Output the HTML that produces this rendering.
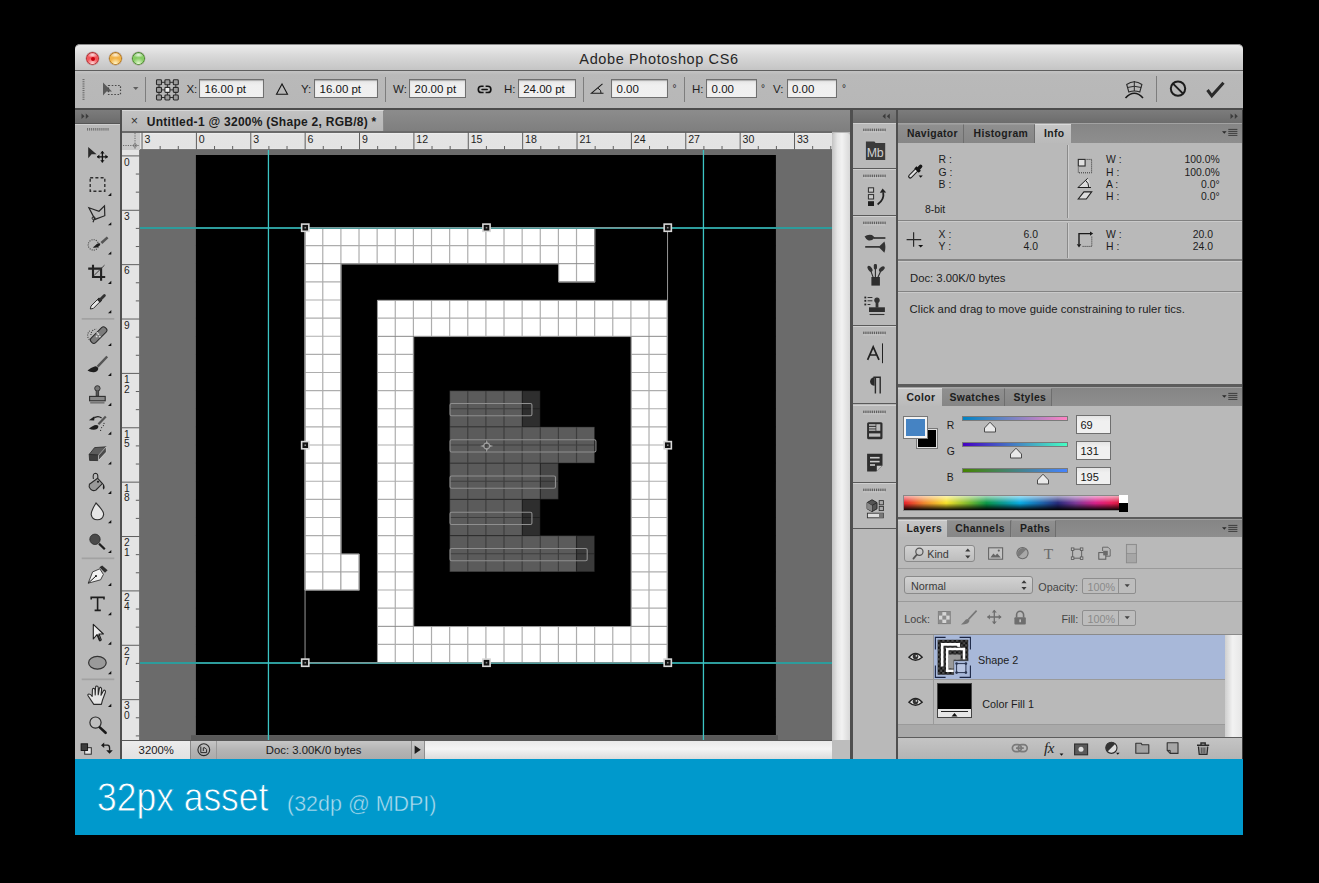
<!DOCTYPE html><html><head><meta charset="utf-8"><style>
html,body{margin:0;padding:0;background:#000;width:1319px;height:883px;overflow:hidden}
body{position:relative;font-family:"Liberation Sans", sans-serif}
div{position:absolute;box-sizing:border-box}
.t{white-space:nowrap}
svg{overflow:visible}
</style></head><body>
<div style="left:75px;top:44px;width:1168px;height:716px;background:#b9b9b9;border-radius:5px 5px 0 0"></div>
<div style="left:75px;top:44px;width:1168px;height:27px;background:linear-gradient(#ececec,#d9d9d9 40%,#c3c3c3);border-radius:5px 5px 0 0;border-top:1px solid #8a8a8a"></div>
<div style="left:75px;top:70px;width:1168px;height:1px;background:#5e5e5e"></div>
<div style="left:86.1px;top:52.099999999999994px;width:13.4px;height:13.4px;border-radius:50%;background:radial-gradient(ellipse 42% 22% at 50% 22%,rgba(255,255,255,.85),rgba(255,255,255,0)),radial-gradient(circle at 50% 88%,#ffd6d6 0%,#f2555a 42%,#f2555a 64%,#a8262a 100%);box-shadow:inset 0 0 0 0.8px #a8262a,0 0 0 0.4px rgba(90,40,40,.35)"></div>
<div style="left:108.8px;top:52.099999999999994px;width:13.4px;height:13.4px;border-radius:50%;background:radial-gradient(ellipse 42% 22% at 50% 22%,rgba(255,255,255,.85),rgba(255,255,255,0)),radial-gradient(circle at 50% 88%,#fff3c4 0%,#f2b348 42%,#f2b348 64%,#a86c12 100%);box-shadow:inset 0 0 0 0.8px #a86c12,0 0 0 0.4px rgba(90,40,40,.35)"></div>
<div style="left:131.5px;top:52.099999999999994px;width:13.4px;height:13.4px;border-radius:50%;background:radial-gradient(ellipse 42% 22% at 50% 22%,rgba(255,255,255,.85),rgba(255,255,255,0)),radial-gradient(circle at 50% 88%,#e4f7cf 0%,#86cc64 42%,#86cc64 64%,#3c7c24 100%);box-shadow:inset 0 0 0 0.8px #3c7c24,0 0 0 0.4px rgba(90,40,40,.35)"></div>
<div style="left:90.6px;top:56.6px;width:4.4px;height:4.4px;border-radius:50%;background:#c8000e"></div>
<div class="t" style="left:359px;width:600px;text-align:center;top:52.13px;font-size:14.5px;line-height:14.5px;color:#262626;font-weight:normal;letter-spacing:0.62px;">Adobe Photoshop CS6</div>
<div style="left:75px;top:71px;width:1168px;height:38px;background:linear-gradient(#c4c4c4,#b9b9b9 10%,#b7b7b7)"></div>
<div style="left:75px;top:108px;width:1168px;height:2px;background:#4c4c4c"></div>
<svg style="position:absolute;left:81px;top:78px;" width="5" height="24" viewBox="81 78 5 24"><rect x="82.5" y="79.0" width="2" height="1.1" fill="#6e6e6e"/><rect x="82.5" y="81.2" width="2" height="1.1" fill="#6e6e6e"/><rect x="82.5" y="83.4" width="2" height="1.1" fill="#6e6e6e"/><rect x="82.5" y="85.6" width="2" height="1.1" fill="#6e6e6e"/><rect x="82.5" y="87.8" width="2" height="1.1" fill="#6e6e6e"/><rect x="82.5" y="90.0" width="2" height="1.1" fill="#6e6e6e"/><rect x="82.5" y="92.2" width="2" height="1.1" fill="#6e6e6e"/><rect x="82.5" y="94.4" width="2" height="1.1" fill="#6e6e6e"/><rect x="82.5" y="96.6" width="2" height="1.1" fill="#6e6e6e"/><rect x="82.5" y="98.8" width="2" height="1.1" fill="#6e6e6e"/></svg>
<svg style="position:absolute;left:100px;top:80px;" width="40" height="20" viewBox="100 80 40 20"><path d="M103 82.5 L103 95.5 L106.5 91.5 L112 91.5 Z" fill="#5a5a5a"/><rect x="108.5" y="85.5" width="12" height="9" fill="none" stroke="#4a4a4a" stroke-width="1.2" stroke-dasharray="1.6 1.6"/><path d="M133 87 L138.5 87 L135.75 90 Z" fill="#5e5e5e"/></svg>
<div style="left:145px;top:77px;width:1px;height:25px;background:#7d7d7d"></div>
<svg style="position:absolute;left:154px;top:78px;" width="26" height="24" viewBox="154 78 26 24"><path d="M159 82.3H175.8M159 89.9H175.8M159 97.5H175.8M159 82.3V97.5M167.4 82.3V97.5M175.8 82.3V97.5" stroke="#2e2e2e" stroke-width="1"/><rect x="156.5" y="79.8" width="5" height="5" rx="0.9" fill="#9c9c9c" stroke="#2a2a2a" stroke-width="1.1"/><rect x="156.5" y="87.4" width="5" height="5" rx="0.9" fill="#9c9c9c" stroke="#2a2a2a" stroke-width="1.1"/><rect x="156.5" y="95.0" width="5" height="5" rx="0.9" fill="#9c9c9c" stroke="#2a2a2a" stroke-width="1.1"/><rect x="164.9" y="79.8" width="5" height="5" rx="0.9" fill="#9c9c9c" stroke="#2a2a2a" stroke-width="1.1"/><rect x="164.9" y="87.4" width="5" height="5" rx="0.9" fill="#f4f4f4" stroke="#2a2a2a" stroke-width="1.1"/><rect x="164.9" y="95.0" width="5" height="5" rx="0.9" fill="#9c9c9c" stroke="#2a2a2a" stroke-width="1.1"/><rect x="173.3" y="79.8" width="5" height="5" rx="0.9" fill="#9c9c9c" stroke="#2a2a2a" stroke-width="1.1"/><rect x="173.3" y="87.4" width="5" height="5" rx="0.9" fill="#9c9c9c" stroke="#2a2a2a" stroke-width="1.1"/><rect x="173.3" y="95.0" width="5" height="5" rx="0.9" fill="#9c9c9c" stroke="#2a2a2a" stroke-width="1.1"/></svg>
<div class="t" style="left:186.4px;top:83.87px;font-size:11.5px;line-height:11.5px;color:#1f1f1f;font-weight:normal;letter-spacing:0px;">X:</div>
<div style="left:199.2px;top:78.8px;width:64.40000000000003px;height:19.700000000000003px;background:linear-gradient(#e4e4e4,#efefef 30%,#f0f0f0);border:1px solid #6f6f6f;box-shadow:inset 0 1px 1px rgba(0,0,0,.25)"></div>
<div class="t" style="left:204.5px;top:83.87px;font-size:11.5px;line-height:11.5px;color:#141414;font-weight:normal;letter-spacing:0px;">16.00 pt</div>
<svg style="position:absolute;left:274px;top:82px;" width="16" height="14" viewBox="274 82 16 14"><path d="M282 84 L276.5 94.2 L287.5 94.2 Z" fill="none" stroke="#141414" stroke-width="1.1"/></svg>
<div class="t" style="left:301px;top:83.87px;font-size:11.5px;line-height:11.5px;color:#1f1f1f;font-weight:normal;letter-spacing:0px;">Y:</div>
<div style="left:314.2px;top:78.8px;width:64.0px;height:19.700000000000003px;background:linear-gradient(#e4e4e4,#efefef 30%,#f0f0f0);border:1px solid #6f6f6f;box-shadow:inset 0 1px 1px rgba(0,0,0,.25)"></div>
<div class="t" style="left:319.5px;top:83.87px;font-size:11.5px;line-height:11.5px;color:#141414;font-weight:normal;letter-spacing:0px;">16.00 pt</div>
<div style="left:385px;top:77px;width:1px;height:25px;background:#7d7d7d"></div>
<div class="t" style="left:393px;top:83.87px;font-size:11.5px;line-height:11.5px;color:#1f1f1f;font-weight:normal;letter-spacing:0px;">W:</div>
<div style="left:409.3px;top:78.8px;width:57.099999999999966px;height:19.700000000000003px;background:linear-gradient(#e4e4e4,#efefef 30%,#f0f0f0);border:1px solid #6f6f6f;box-shadow:inset 0 1px 1px rgba(0,0,0,.25)"></div>
<div class="t" style="left:414.6px;top:83.87px;font-size:11.5px;line-height:11.5px;color:#141414;font-weight:normal;letter-spacing:0px;">20.00 pt</div>
<svg style="position:absolute;left:474px;top:82px;" width="20" height="14" viewBox="474 82 20 14"><path d="M483.6 86.3 H481.4 A3.1 3.1 0 0 0 481.4 92.5 H483.6 M485.6 86.3 H487.8 A3.1 3.1 0 0 1 487.8 92.5 H485.6" fill="none" stroke="#111" stroke-width="1.6"/><path d="M482 89.4 H487.2" stroke="#111" stroke-width="1.5" stroke-linecap="round"/></svg>
<div class="t" style="left:504px;top:83.87px;font-size:11.5px;line-height:11.5px;color:#1f1f1f;font-weight:normal;letter-spacing:0px;">H:</div>
<div style="left:517.9px;top:78.8px;width:57.89999999999998px;height:19.700000000000003px;background:linear-gradient(#e4e4e4,#efefef 30%,#f0f0f0);border:1px solid #6f6f6f;box-shadow:inset 0 1px 1px rgba(0,0,0,.25)"></div>
<div class="t" style="left:523.1999999999999px;top:83.87px;font-size:11.5px;line-height:11.5px;color:#141414;font-weight:normal;letter-spacing:0px;">24.00 pt</div>
<div style="left:583px;top:77px;width:1px;height:25px;background:#7d7d7d"></div>
<svg style="position:absolute;left:589px;top:82px;" width="16" height="13" viewBox="589 82 16 13"><path d="M602.5 83.8 L591.5 93.2 L603.5 93.2" fill="none" stroke="#1a1a1a" stroke-width="1.1"/><path d="M598 88.2 Q601.6 90.2 601 93.2" fill="none" stroke="#1a1a1a" stroke-width="1"/></svg>
<div style="left:611.2px;top:78.8px;width:57.299999999999955px;height:19.700000000000003px;background:linear-gradient(#e4e4e4,#efefef 30%,#f0f0f0);border:1px solid #6f6f6f;box-shadow:inset 0 1px 1px rgba(0,0,0,.25)"></div>
<div class="t" style="left:616.5px;top:83.87px;font-size:11.5px;line-height:11.5px;color:#141414;font-weight:normal;letter-spacing:0px;">0.00</div>
<div class="t" style="left:672.5px;top:83.73px;font-size:10px;line-height:10px;color:#1f1f1f;font-weight:normal;letter-spacing:0px;">°</div>
<div style="left:683.5px;top:77px;width:1px;height:25px;background:#7d7d7d"></div>
<div class="t" style="left:692px;top:83.87px;font-size:11.5px;line-height:11.5px;color:#1f1f1f;font-weight:normal;letter-spacing:0px;">H:</div>
<div style="left:706.3px;top:78.8px;width:50.30000000000007px;height:19.700000000000003px;background:linear-gradient(#e4e4e4,#efefef 30%,#f0f0f0);border:1px solid #6f6f6f;box-shadow:inset 0 1px 1px rgba(0,0,0,.25)"></div>
<div class="t" style="left:711.5999999999999px;top:83.87px;font-size:11.5px;line-height:11.5px;color:#141414;font-weight:normal;letter-spacing:0px;">0.00</div>
<div class="t" style="left:761px;top:83.73px;font-size:10px;line-height:10px;color:#1f1f1f;font-weight:normal;letter-spacing:0px;">°</div>
<div class="t" style="left:773px;top:83.87px;font-size:11.5px;line-height:11.5px;color:#1f1f1f;font-weight:normal;letter-spacing:0px;">V:</div>
<div style="left:786.6px;top:78.8px;width:50.69999999999993px;height:19.700000000000003px;background:linear-gradient(#e4e4e4,#efefef 30%,#f0f0f0);border:1px solid #6f6f6f;box-shadow:inset 0 1px 1px rgba(0,0,0,.25)"></div>
<div class="t" style="left:791.9px;top:83.87px;font-size:11.5px;line-height:11.5px;color:#141414;font-weight:normal;letter-spacing:0px;">0.00</div>
<div class="t" style="left:842px;top:83.73px;font-size:10px;line-height:10px;color:#1f1f1f;font-weight:normal;letter-spacing:0px;">°</div>
<svg style="position:absolute;left:1122px;top:78px;" width="24" height="24" viewBox="1122 78 24 24"><path d="M1126.7 84.5 Q1134.3 79 1141.9 84.5 L1139.8 92 Q1134.3 90 1128.8 92 Z" fill="none" stroke="#2a2a2a" stroke-width="1.1"/><path d="M1134.3 81 V91 M1127.5 87.5 Q1134.3 85 1141.2 87.5" fill="none" stroke="#2a2a2a" stroke-width="1"/><path d="M1125.5 98 Q1134.3 88.5 1143 98" fill="none" stroke="#1a1a1a" stroke-width="1.6"/></svg>
<div style="left:1156.3px;top:76px;width:1px;height:26px;background:#7d7d7d"></div>
<svg style="position:absolute;left:1166px;top:78px;" width="24" height="22" viewBox="1166 78 24 22"><circle cx="1178" cy="88.6" r="7.2" fill="none" stroke="#1c1c1c" stroke-width="2"/><path d="M1173 83.6 L1183 93.6" stroke="#1c1c1c" stroke-width="2"/></svg>
<svg style="position:absolute;left:1204px;top:78px;" width="24" height="22" viewBox="1204 78 24 22"><path d="M1207.5 90 L1211.8 95.8 L1223.5 82.8" fill="none" stroke="#2a2a2a" stroke-width="3"/></svg>
<div style="left:75px;top:110px;width:44.5px;height:13px;background:linear-gradient(#7c7c7c,#6c6c6c)"></div>
<div style="left:75px;top:122.5px;width:44.5px;height:1px;background:#555"></div>
<div style="left:75px;top:123.5px;width:44.5px;height:636px;background:#b9b9b9;border-top:1px solid #cfcfcf"></div>
<div style="left:119.5px;top:110px;width:2.5px;height:650px;background:#4f4f4f"></div>
<svg style="position:absolute;left:80px;top:112px;" width="12" height="10" viewBox="80 112 12 10"><path d="M81.5 113.5 L84.5 116.2 L81.5 118.9Z M85.8 113.5 L88.8 116.2 L85.8 118.9Z" fill="#3c3c3c"/></svg>
<svg style="position:absolute;left:86px;top:127px;" width="24" height="4" viewBox="86 127 24 4"><rect x="87.00" y="128" width="1.1" height="2.6" fill="#707070"/><rect x="89.05" y="128" width="1.1" height="2.6" fill="#707070"/><rect x="91.10" y="128" width="1.1" height="2.6" fill="#707070"/><rect x="93.15" y="128" width="1.1" height="2.6" fill="#707070"/><rect x="95.20" y="128" width="1.1" height="2.6" fill="#707070"/><rect x="97.25" y="128" width="1.1" height="2.6" fill="#707070"/><rect x="99.30" y="128" width="1.1" height="2.6" fill="#707070"/><rect x="101.35" y="128" width="1.1" height="2.6" fill="#707070"/><rect x="103.40" y="128" width="1.1" height="2.6" fill="#707070"/><rect x="105.45" y="128" width="1.1" height="2.6" fill="#707070"/><rect x="107.50" y="128" width="1.1" height="2.6" fill="#707070"/></svg>
<svg style="position:absolute;left:76px;top:123px;" width="44" height="636" viewBox="76 123 44 636"><path d="M108 195.9 L111.3 195.9 L111.3 192.8 Z" fill="#111"/><path d="M108 225.3 L111.3 225.3 L111.3 222.2 Z" fill="#111"/><path d="M108 254.5 L111.3 254.5 L111.3 251.4 Z" fill="#111"/><path d="M108 283.9 L111.3 283.9 L111.3 280.8 Z" fill="#111"/><path d="M108 313.2 L111.3 313.2 L111.3 310.1 Z" fill="#111"/><path d="M108 346.1 L111.3 346.1 L111.3 343.0 Z" fill="#111"/><path d="M108 375.9 L111.3 375.9 L111.3 372.8 Z" fill="#111"/><path d="M108 405.9 L111.3 405.9 L111.3 402.8 Z" fill="#111"/><path d="M108 434.7 L111.3 434.7 L111.3 431.6 Z" fill="#111"/><path d="M108 464.5 L111.3 464.5 L111.3 461.4 Z" fill="#111"/><path d="M108 493.9 L111.3 493.9 L111.3 490.8 Z" fill="#111"/><path d="M108 523.2 L111.3 523.2 L111.3 520.1 Z" fill="#111"/><path d="M108 553.0 L111.3 553.0 L111.3 549.9 Z" fill="#111"/><path d="M108 585.9 L111.3 585.9 L111.3 582.8 Z" fill="#111"/><path d="M108 615.2 L111.3 615.2 L111.3 612.1 Z" fill="#111"/><path d="M108 644.7 L111.3 644.7 L111.3 641.6 Z" fill="#111"/><path d="M108 674.2 L111.3 674.2 L111.3 671.1 Z" fill="#111"/><path d="M108 706.9 L111.3 706.9 L111.3 703.8 Z" fill="#111"/><rect x="81.7" y="318.0" width="32.6" height="1.7" fill="#a2a2a2"/><rect x="81.7" y="557.5" width="32.6" height="1.7" fill="#a2a2a2"/><rect x="81.7" y="678.5" width="32.6" height="1.7" fill="#a2a2a2"/><path d="M88.2 147.1 L88.2 158.2 L91.6 154.3 L96.6 154.3 Z" fill="#2a2a2a"/><path d="M102.4 151.2 V162.4 M97 156.8 H107.8" stroke="#111" stroke-width="1.3"/><path d="M100.2 153.4 L102.4 151 L104.6 153.4Z M100.2 160.2 L102.4 162.6 L104.6 160.2Z M99.4 154.6 L97 156.8 L99.4 159Z M105.4 154.6 L107.8 156.8 L105.4 159Z" fill="#111"/><rect x="90.2" y="177.8" width="14.6" height="13.4" fill="none" stroke="#2e2e2e" stroke-width="1.4" stroke-dasharray="3 2.2"/><path d="M88.9 207.8 L99 211.2 L104.5 205.8 L104.8 215.7 L95 219.4 Z" fill="none" stroke="#262626" stroke-width="1.2"/><circle cx="93.6" cy="218.2" r="1.5" fill="none" stroke="#262626" stroke-width="1"/><path d="M94 219.6 L93 222.3" stroke="#262626" stroke-width="1.2"/><circle cx="93.4" cy="244.9" r="5.2" fill="none" stroke="#333" stroke-width="1.1" stroke-dasharray="0.9 1.3"/><path d="M101.4 243 L107.6 237.4" stroke="#555" stroke-width="2.6"/><path d="M92.8 247.6 Q96 247.9 98.4 246.8 Q101 245.2 100.2 243.6 Q98.8 242.6 96.8 243.9 Q95 245.8 92.8 247.6Z" fill="#1e1e1e"/><path d="M93 264.8 V277 H105.2 M88.2 268.6 H101.1 V280.8" fill="none" stroke="#222" stroke-width="2.1"/><path d="M94.3 275.2 L104.5 265.2" stroke="#333" stroke-width="0.9"/><path d="M90.3 309 L91 306 L99 298 L101.4 300.4 L93.4 308.4 Z" fill="#e6e6e6" stroke="#2a2a2a" stroke-width="1"/><path d="M98 298.6 L101 301.6" stroke="#2a2a2a" stroke-width="3"/><path d="M100.4 299.6 L104.4 295.6" stroke="#333" stroke-width="2.8" stroke-linecap="round"/><path d="M91 335 A5.6 5.6 0 0 1 96.6 329" fill="none" stroke="#333" stroke-width="1.1" stroke-dasharray="0.9 1.3"/><path d="M89.8 330.8 A6 6 0 0 0 91.6 341" fill="none" stroke="#333" stroke-width="1.1" stroke-dasharray="0.9 1.3"/><rect x="88.6" y="331.8" width="20" height="6.4" rx="2.6" transform="rotate(-45 98.7 335)" fill="#7c7c7c" stroke="#2a2a2a" stroke-width="1"/><circle cx="98.4" cy="334.2" r="0.9" fill="#ddd"/><circle cx="96.6" cy="336.4" r="0.9" fill="#ddd"/><circle cx="99.8" cy="336.6" r="0.9" fill="#ddd"/><circle cx="97.2" cy="332.8" r="0.9" fill="#ddd"/><path d="M97.6 366.6 L107.2 356.5" stroke="#555" stroke-width="2.4"/><path d="M87.5 370.4 Q90 372.4 94 372.2 Q98.6 371.4 98.2 368 Q97.2 366 94.6 366.4 Q91 367.4 87.5 370.4Z" fill="#1e1e1e"/><circle cx="97.4" cy="388.4" r="2.7" fill="#777" stroke="#333" stroke-width="1"/><path d="M96.2 390.6 V396.2 H98.6 V390.6" fill="#555" stroke="#333" stroke-width=".9"/><rect x="89.6" y="396.4" width="15.6" height="4.4" fill="#888" stroke="#2e2e2e" stroke-width="1.1"/><rect x="90.2" y="401.8" width="14.3" height="1.8" fill="#777"/><path d="M88.9 420.3 L94.4 416.2 L94.2 420.4 Z" fill="#1e1e1e"/><path d="M93.4 418.4 Q97.8 415 101.6 418" fill="none" stroke="#222" stroke-width="1.1"/><path d="M98.4 424.3 L105.8 416.5" stroke="#555" stroke-width="2.2"/><path d="M88.9 428.4 Q92 430.2 95.4 429.6 Q99 428.6 98.2 425.8 Q97 424.6 94.4 425.2 Q91.6 426.4 88.9 428.4Z" fill="#1e1e1e"/><circle cx="101.6" cy="427.6" r=".6" fill="#333"/><circle cx="103.4" cy="425.6" r=".6" fill="#333"/><circle cx="100.6" cy="430.4" r=".6" fill="#333"/><circle cx="104" cy="423.4" r=".6" fill="#333"/><path d="M89.2 454.4 L94.6 447.6 L106.2 446.8 L98.6 455.2 Z" fill="#5c5c5c" stroke="#2a2a2a" stroke-width=".8"/><path d="M89.2 454.4 L98.6 455.2 L98.4 460.6 L89.6 460.4 Z" fill="#3e3e3e" stroke="#2a2a2a" stroke-width=".8"/><path d="M98.6 455.2 L106.2 446.8 L106.4 452 L98.4 460.6Z" fill="#4a4a4a" stroke="#eee" stroke-width=".6"/><path d="M93.4 479 Q92.4 473.2 95.6 473.2 Q98.2 473.4 97.8 478" fill="none" stroke="#2a2a2a" stroke-width="1.1"/><path d="M89.4 484.2 L97.6 478.2 L102.4 483.6 L96 490 Q93 491.6 90.6 489.2 Q88.4 486.6 89.4 484.2Z" fill="#999" stroke="#2a2a2a" stroke-width="1.1"/><circle cx="98" cy="481.8" r="1" fill="#111"/><path d="M102.2 483 Q104.6 484 104.6 487.6 Q104.4 489.6 103.4 489.4 Q102.4 488.6 103 485.6" fill="#1e1e1e"/><path d="M96 503 Q104 511 103.6 514.6 A6.3 6.3 0 0 1 91.2 514.6 Q91 511 96 503Z" fill="#e6e6e6" stroke="#2e2e2e" stroke-width="1.1"/><circle cx="95" cy="539.3" r="5.2" fill="#4a4a4a" stroke="#2a2a2a" stroke-width=".8"/><path d="M99 543.6 L104.8 549.2" stroke="#1e1e1e" stroke-width="2.2"/><path d="M88.2 583.2 L92.6 571.9 L99.8 568.8 L103.4 574.4 L100.6 579.8 Z" fill="#f0f0f0" stroke="#333" stroke-width=".9"/><path d="M99.4 567.2 L102.2 565.4 L107.6 570.2 L105 572.8 Z" fill="#2e2e2e"/><path d="M88.4 583 L96 576" stroke="#111" stroke-width="1"/><circle cx="96" cy="576" r="1" fill="#111"/><path d="M91.2 599.6 V597.4 H104 V599.6 M97.6 597.4 V610.4 M94.6 610.4 H100.8" fill="none" stroke="#1e1e1e" stroke-width="1.6"/><path d="M93.3 624.3 L93.3 639 L97 634.6 L99.4 640.6 L101.3 640 L99 634 L103.4 634 Z" fill="#ececec" stroke="#1e1e1e" stroke-width="1.1" stroke-linejoin="round"/><path d="M97.6 634.6 L100.4 641.2" stroke="#222" stroke-width="1.6"/><ellipse cx="97.4" cy="662.8" rx="8.8" ry="6.4" fill="#9a9a9a" stroke="#333" stroke-width="1.2"/><path d="M93.8 704.4 L88.2 696 Q87.2 694.4 88.8 694 Q90.4 693.8 92.2 696.4 L92.4 689.8 Q92.6 688.2 93.8 688.4 Q95 688.6 95 690 L95.2 695 L95.6 687.4 Q95.8 685.8 97 686 Q98.2 686.2 98.2 687.6 L98.2 694.8 L99.4 688.4 Q99.8 687.2 100.8 687.4 Q101.8 687.8 101.6 689.2 L101 695.2 L103.4 690.8 Q104.2 689.8 105 690.4 Q105.8 691 105.4 692.2 L102.4 700.4 L101.4 704.4 Z" fill="#e4e4e4" stroke="#2a2a2a" stroke-width="1.1" stroke-linejoin="round"/><circle cx="95.5" cy="722.6" r="5.6" fill="#c0c0c0" stroke="#2a2a2a" stroke-width="1.2"/><path d="M99.8 727.4 L105.6 732.8" stroke="#1a1a1a" stroke-width="2.6" stroke-linecap="round"/><rect x="84.7" y="747.7" width="6.6" height="6.5" fill="#e6e6e6" stroke="#2a2a2a" stroke-width="1"/><rect x="81.1" y="743.8" width="6.5" height="6.7" fill="#3c3c3c" stroke="#111" stroke-width=".9"/><path d="M103.6 745.2 H107.6 Q109.7 745.4 109.6 748.2 V750.6" fill="none" stroke="#1e1e1e" stroke-width="1.3"/><path d="M101 745.2 L104.2 742.4 L104.2 748 Z M106.2 750.2 H112.8 L109.5 753.8 Z" fill="#1a1a1a"/></svg>
<div style="left:122px;top:110px;width:728px;height:22px;background:linear-gradient(#8c8c8c,#7e7e7e)"></div>
<div style="left:122px;top:110px;width:262.4px;height:22px;background:linear-gradient(#c2c2c2,#b6b6b6);border-top:1px solid #d8d8d8;border-right:1px solid #8a8a8a"></div>
<div style="left:122px;top:131.2px;width:710px;height:1.5px;background:#6a6a6a"></div>
<div style="left:122px;top:132.7px;width:710px;height:1px;background:#f2f2f2"></div>
<div class="t" style="left:-165.5px;width:600px;text-align:center;top:115.42px;font-size:12.5px;line-height:12.5px;color:#333;font-weight:normal;letter-spacing:0px;">×</div>
<div class="t" style="left:146.8px;top:116.34px;font-size:12px;line-height:12px;color:#1b1b1b;font-weight:bold;letter-spacing:0.27px;">Untitled-1 @ 3200% (Shape 2, RGB/8) *</div>
<div style="left:122px;top:132.7px;width:710px;height:17.3px;background:linear-gradient(#f0f0f0,#e4e4e4 10%,#e3e3e3 85%,#eeeeee)"></div>
<div style="left:122px;top:132.7px;width:18px;height:17.3px;background:#c9c9c9"></div>
<div style="left:140px;top:149px;width:692px;height:1px;background:#777"></div>
<div style="left:122px;top:150px;width:18px;height:590px;background:#e4e4e4"></div>
<div style="left:139px;top:150px;width:1px;height:590px;background:#777"></div>
<svg style="position:absolute;left:122px;top:132px;" width="18" height="18" viewBox="122 132 18 18"><path d="M135 133 V149 M123 145.5 H139" stroke="#6a6a6a" stroke-width="1" stroke-dasharray="1.2 1.2"/><circle cx="135" cy="145.5" r="1.6" fill="none" stroke="#6a6a6a" stroke-width=".8"/></svg>
<svg style="position:absolute;left:140px;top:132px;" width="692" height="18" viewBox="140 132 692 18"><rect x="141.53" y="132" width="1" height="17.5" fill="#5f5f5f"/><rect x="159.65" y="146" width="1" height="3.5" fill="#5f5f5f"/><rect x="177.78" y="146" width="1" height="3.5" fill="#5f5f5f"/><rect x="195.90" y="132" width="1" height="17.5" fill="#5f5f5f"/><rect x="214.03" y="146" width="1" height="3.5" fill="#5f5f5f"/><rect x="232.15" y="146" width="1" height="3.5" fill="#5f5f5f"/><rect x="250.28" y="132" width="1" height="17.5" fill="#5f5f5f"/><rect x="268.40" y="146" width="1" height="3.5" fill="#5f5f5f"/><rect x="286.52" y="146" width="1" height="3.5" fill="#5f5f5f"/><rect x="304.65" y="132" width="1" height="17.5" fill="#5f5f5f"/><rect x="322.77" y="146" width="1" height="3.5" fill="#5f5f5f"/><rect x="340.90" y="146" width="1" height="3.5" fill="#5f5f5f"/><rect x="359.02" y="132" width="1" height="17.5" fill="#5f5f5f"/><rect x="377.15" y="146" width="1" height="3.5" fill="#5f5f5f"/><rect x="395.27" y="146" width="1" height="3.5" fill="#5f5f5f"/><rect x="413.40" y="132" width="1" height="17.5" fill="#5f5f5f"/><rect x="431.52" y="146" width="1" height="3.5" fill="#5f5f5f"/><rect x="449.65" y="146" width="1" height="3.5" fill="#5f5f5f"/><rect x="467.77" y="132" width="1" height="17.5" fill="#5f5f5f"/><rect x="485.90" y="146" width="1" height="3.5" fill="#5f5f5f"/><rect x="504.02" y="146" width="1" height="3.5" fill="#5f5f5f"/><rect x="522.15" y="132" width="1" height="17.5" fill="#5f5f5f"/><rect x="540.27" y="146" width="1" height="3.5" fill="#5f5f5f"/><rect x="558.40" y="146" width="1" height="3.5" fill="#5f5f5f"/><rect x="576.52" y="132" width="1" height="17.5" fill="#5f5f5f"/><rect x="594.65" y="146" width="1" height="3.5" fill="#5f5f5f"/><rect x="612.77" y="146" width="1" height="3.5" fill="#5f5f5f"/><rect x="630.90" y="132" width="1" height="17.5" fill="#5f5f5f"/><rect x="649.02" y="146" width="1" height="3.5" fill="#5f5f5f"/><rect x="667.15" y="146" width="1" height="3.5" fill="#5f5f5f"/><rect x="685.27" y="132" width="1" height="17.5" fill="#5f5f5f"/><rect x="703.40" y="146" width="1" height="3.5" fill="#5f5f5f"/><rect x="721.52" y="146" width="1" height="3.5" fill="#5f5f5f"/><rect x="739.65" y="132" width="1" height="17.5" fill="#5f5f5f"/><rect x="757.77" y="146" width="1" height="3.5" fill="#5f5f5f"/><rect x="775.90" y="146" width="1" height="3.5" fill="#5f5f5f"/><rect x="794.02" y="132" width="1" height="17.5" fill="#5f5f5f"/><rect x="812.15" y="146" width="1" height="3.5" fill="#5f5f5f"/><rect x="830.27" y="146" width="1" height="3.5" fill="#5f5f5f"/></svg>
<div class="t" style="left:144.425px;top:134.13px;font-size:10.6px;line-height:10.6px;color:#1e1e1e;font-weight:normal;letter-spacing:0px;">3</div>
<div class="t" style="left:198.8px;top:134.13px;font-size:10.6px;line-height:10.6px;color:#1e1e1e;font-weight:normal;letter-spacing:0px;">0</div>
<div class="t" style="left:253.175px;top:134.13px;font-size:10.6px;line-height:10.6px;color:#1e1e1e;font-weight:normal;letter-spacing:0px;">3</div>
<div class="t" style="left:307.54999999999995px;top:134.13px;font-size:10.6px;line-height:10.6px;color:#1e1e1e;font-weight:normal;letter-spacing:0px;">6</div>
<div class="t" style="left:361.92499999999995px;top:134.13px;font-size:10.6px;line-height:10.6px;color:#1e1e1e;font-weight:normal;letter-spacing:0px;">9</div>
<div class="t" style="left:416.29999999999995px;top:134.13px;font-size:10.6px;line-height:10.6px;color:#1e1e1e;font-weight:normal;letter-spacing:0px;">12</div>
<div class="t" style="left:470.67499999999995px;top:134.13px;font-size:10.6px;line-height:10.6px;color:#1e1e1e;font-weight:normal;letter-spacing:0px;">15</div>
<div class="t" style="left:525.05px;top:134.13px;font-size:10.6px;line-height:10.6px;color:#1e1e1e;font-weight:normal;letter-spacing:0px;">18</div>
<div class="t" style="left:579.425px;top:134.13px;font-size:10.6px;line-height:10.6px;color:#1e1e1e;font-weight:normal;letter-spacing:0px;">21</div>
<div class="t" style="left:633.8px;top:134.13px;font-size:10.6px;line-height:10.6px;color:#1e1e1e;font-weight:normal;letter-spacing:0px;">24</div>
<div class="t" style="left:688.175px;top:134.13px;font-size:10.6px;line-height:10.6px;color:#1e1e1e;font-weight:normal;letter-spacing:0px;">27</div>
<div class="t" style="left:742.55px;top:134.13px;font-size:10.6px;line-height:10.6px;color:#1e1e1e;font-weight:normal;letter-spacing:0px;">30</div>
<div class="t" style="left:796.925px;top:134.13px;font-size:10.6px;line-height:10.6px;color:#1e1e1e;font-weight:normal;letter-spacing:0px;">33</div>
<svg style="position:absolute;left:122px;top:150px;" width="18" height="590" viewBox="122 150 18 590"><rect x="122" y="155.40" width="17.5" height="1" fill="#5f5f5f"/><rect x="135.8" y="173.53" width="3.5" height="1" fill="#5f5f5f"/><rect x="135.8" y="191.65" width="3.5" height="1" fill="#5f5f5f"/><rect x="122" y="209.78" width="17.5" height="1" fill="#5f5f5f"/><rect x="135.8" y="227.90" width="3.5" height="1" fill="#5f5f5f"/><rect x="135.8" y="246.03" width="3.5" height="1" fill="#5f5f5f"/><rect x="122" y="264.15" width="17.5" height="1" fill="#5f5f5f"/><rect x="135.8" y="282.27" width="3.5" height="1" fill="#5f5f5f"/><rect x="135.8" y="300.40" width="3.5" height="1" fill="#5f5f5f"/><rect x="122" y="318.52" width="17.5" height="1" fill="#5f5f5f"/><rect x="135.8" y="336.65" width="3.5" height="1" fill="#5f5f5f"/><rect x="135.8" y="354.77" width="3.5" height="1" fill="#5f5f5f"/><rect x="122" y="372.90" width="17.5" height="1" fill="#5f5f5f"/><rect x="135.8" y="391.02" width="3.5" height="1" fill="#5f5f5f"/><rect x="135.8" y="409.15" width="3.5" height="1" fill="#5f5f5f"/><rect x="122" y="427.27" width="17.5" height="1" fill="#5f5f5f"/><rect x="135.8" y="445.40" width="3.5" height="1" fill="#5f5f5f"/><rect x="135.8" y="463.52" width="3.5" height="1" fill="#5f5f5f"/><rect x="122" y="481.65" width="17.5" height="1" fill="#5f5f5f"/><rect x="135.8" y="499.77" width="3.5" height="1" fill="#5f5f5f"/><rect x="135.8" y="517.90" width="3.5" height="1" fill="#5f5f5f"/><rect x="122" y="536.02" width="17.5" height="1" fill="#5f5f5f"/><rect x="135.8" y="554.15" width="3.5" height="1" fill="#5f5f5f"/><rect x="135.8" y="572.27" width="3.5" height="1" fill="#5f5f5f"/><rect x="122" y="590.40" width="17.5" height="1" fill="#5f5f5f"/><rect x="135.8" y="608.52" width="3.5" height="1" fill="#5f5f5f"/><rect x="135.8" y="626.65" width="3.5" height="1" fill="#5f5f5f"/><rect x="122" y="644.77" width="17.5" height="1" fill="#5f5f5f"/><rect x="135.8" y="662.90" width="3.5" height="1" fill="#5f5f5f"/><rect x="135.8" y="681.02" width="3.5" height="1" fill="#5f5f5f"/><rect x="122" y="699.15" width="17.5" height="1" fill="#5f5f5f"/><rect x="135.8" y="717.27" width="3.5" height="1" fill="#5f5f5f"/><rect x="135.8" y="735.40" width="3.5" height="1" fill="#5f5f5f"/></svg>
<div class="t" style="left:124.0px;top:157.67px;font-size:10.2px;line-height:10.2px;color:#1e1e1e;font-weight:normal;letter-spacing:0px;">0</div>
<div class="t" style="left:124.0px;top:212.04px;font-size:10.2px;line-height:10.2px;color:#1e1e1e;font-weight:normal;letter-spacing:0px;">3</div>
<div class="t" style="left:124.0px;top:266.42px;font-size:10.2px;line-height:10.2px;color:#1e1e1e;font-weight:normal;letter-spacing:0px;">6</div>
<div class="t" style="left:124.0px;top:320.79px;font-size:10.2px;line-height:10.2px;color:#1e1e1e;font-weight:normal;letter-spacing:0px;">9</div>
<div class="t" style="left:124.0px;top:375.17px;font-size:10.2px;line-height:10.2px;color:#1e1e1e;font-weight:normal;letter-spacing:0px;">1</div>
<div class="t" style="left:124.0px;top:384.67px;font-size:10.2px;line-height:10.2px;color:#1e1e1e;font-weight:normal;letter-spacing:0px;">2</div>
<div class="t" style="left:124.0px;top:429.54px;font-size:10.2px;line-height:10.2px;color:#1e1e1e;font-weight:normal;letter-spacing:0px;">1</div>
<div class="t" style="left:124.0px;top:439.04px;font-size:10.2px;line-height:10.2px;color:#1e1e1e;font-weight:normal;letter-spacing:0px;">5</div>
<div class="t" style="left:124.0px;top:483.92px;font-size:10.2px;line-height:10.2px;color:#1e1e1e;font-weight:normal;letter-spacing:0px;">1</div>
<div class="t" style="left:124.0px;top:493.42px;font-size:10.2px;line-height:10.2px;color:#1e1e1e;font-weight:normal;letter-spacing:0px;">8</div>
<div class="t" style="left:124.0px;top:538.29px;font-size:10.2px;line-height:10.2px;color:#1e1e1e;font-weight:normal;letter-spacing:0px;">2</div>
<div class="t" style="left:124.0px;top:547.79px;font-size:10.2px;line-height:10.2px;color:#1e1e1e;font-weight:normal;letter-spacing:0px;">1</div>
<div class="t" style="left:124.0px;top:592.67px;font-size:10.2px;line-height:10.2px;color:#1e1e1e;font-weight:normal;letter-spacing:0px;">2</div>
<div class="t" style="left:124.0px;top:602.17px;font-size:10.2px;line-height:10.2px;color:#1e1e1e;font-weight:normal;letter-spacing:0px;">4</div>
<div class="t" style="left:124.0px;top:647.04px;font-size:10.2px;line-height:10.2px;color:#1e1e1e;font-weight:normal;letter-spacing:0px;">2</div>
<div class="t" style="left:124.0px;top:656.54px;font-size:10.2px;line-height:10.2px;color:#1e1e1e;font-weight:normal;letter-spacing:0px;">7</div>
<div class="t" style="left:124.0px;top:701.42px;font-size:10.2px;line-height:10.2px;color:#1e1e1e;font-weight:normal;letter-spacing:0px;">3</div>
<div class="t" style="left:124.0px;top:710.92px;font-size:10.2px;line-height:10.2px;color:#1e1e1e;font-weight:normal;letter-spacing:0px;">0</div>
<svg style="position:absolute;left:140px;top:150px;overflow:hidden" width="692" height="590" viewBox="140 150 692 590"><rect x="140" y="150" width="692" height="590" fill="#6b6b6b"/><rect x="195.9" y="155.0" width="580.0" height="580.0" fill="#000"/><rect x="191" y="735.2" width="587" height="4.8" fill="#595959"/><rect x="304.65" y="227.50" width="290.00" height="36.25" fill="#ffffff"/><rect x="558.40" y="263.75" width="36.25" height="18.12" fill="#ffffff"/><rect x="304.65" y="263.75" width="36.25" height="326.25" fill="#ffffff"/><rect x="340.90" y="553.75" width="18.12" height="36.25" fill="#ffffff"/><rect x="377.15" y="300.00" width="290.00" height="36.25" fill="#ffffff"/><rect x="377.15" y="626.25" width="290.00" height="36.25" fill="#ffffff"/><rect x="377.15" y="336.25" width="36.25" height="290.00" fill="#ffffff"/><rect x="630.90" y="336.25" width="36.25" height="290.00" fill="#ffffff"/><rect x="449.65" y="390.62" width="72.50" height="36.25" fill="#5b5b5b"/><rect x="522.15" y="390.62" width="18.12" height="36.25" fill="#2e2e2e"/><rect x="449.65" y="426.88" width="145.00" height="36.25" fill="#5b5b5b"/><rect x="449.65" y="463.12" width="90.62" height="36.25" fill="#5b5b5b"/><rect x="540.27" y="463.12" width="18.12" height="36.25" fill="#474747"/><rect x="449.65" y="499.38" width="72.50" height="36.25" fill="#5b5b5b"/><rect x="522.15" y="499.38" width="18.12" height="36.25" fill="#2e2e2e"/><rect x="449.65" y="535.62" width="126.88" height="36.25" fill="#5b5b5b"/><rect x="576.52" y="535.62" width="18.12" height="36.25" fill="#3b3b3b"/><path d="M214.03 155.0V735.00M195.9 173.12H775.90M232.15 155.0V735.00M195.9 191.25H775.90M250.28 155.0V735.00M195.9 209.38H775.90M268.40 155.0V735.00M195.9 227.50H775.90M286.52 155.0V735.00M195.9 245.62H775.90M304.65 155.0V735.00M195.9 263.75H775.90M322.77 155.0V735.00M195.9 281.88H775.90M340.90 155.0V735.00M195.9 300.00H775.90M359.02 155.0V735.00M195.9 318.12H775.90M377.15 155.0V735.00M195.9 336.25H775.90M395.27 155.0V735.00M195.9 354.38H775.90M413.40 155.0V735.00M195.9 372.50H775.90M431.52 155.0V735.00M195.9 390.62H775.90M449.65 155.0V735.00M195.9 408.75H775.90M467.77 155.0V735.00M195.9 426.88H775.90M485.90 155.0V735.00M195.9 445.00H775.90M504.02 155.0V735.00M195.9 463.12H775.90M522.15 155.0V735.00M195.9 481.25H775.90M540.27 155.0V735.00M195.9 499.38H775.90M558.40 155.0V735.00M195.9 517.50H775.90M576.52 155.0V735.00M195.9 535.62H775.90M594.65 155.0V735.00M195.9 553.75H775.90M612.77 155.0V735.00M195.9 571.88H775.90M630.90 155.0V735.00M195.9 590.00H775.90M649.02 155.0V735.00M195.9 608.12H775.90M667.15 155.0V735.00M195.9 626.25H775.90M685.27 155.0V735.00M195.9 644.38H775.90M703.40 155.0V735.00M195.9 662.50H775.90M721.52 155.0V735.00M195.9 680.62H775.90M739.65 155.0V735.00M195.9 698.75H775.90M757.77 155.0V735.00M195.9 716.88H775.90" stroke="#000" stroke-opacity="0.32" stroke-width="1.2"/><rect x="450.05" y="403.55" width="81.87" height="12.2" rx="1.5" fill="none" stroke="#8f8f8f" stroke-width="1.1"/><rect x="450.05" y="439.80" width="145.85" height="12.2" rx="1.5" fill="none" stroke="#8f8f8f" stroke-width="1.1"/><rect x="450.05" y="476.05" width="105.43" height="12.2" rx="1.5" fill="none" stroke="#8f8f8f" stroke-width="1.1"/><rect x="450.05" y="512.30" width="81.87" height="12.2" rx="1.5" fill="none" stroke="#8f8f8f" stroke-width="1.1"/><rect x="450.05" y="548.55" width="137.15" height="12.2" rx="1.5" fill="none" stroke="#8f8f8f" stroke-width="1.1"/><circle cx="486.70" cy="446.00" r="2.9" fill="none" stroke="#9c9c9c" stroke-width="1.1"/><path d="M480.10 446.00 L484.10 444.80 L484.10 447.20Z M493.30 446.00 L489.30 444.80 L489.30 447.20Z M486.70 439.80 L485.50 443.40 L487.90 443.40Z M486.70 452.20 L485.50 448.60 L487.90 448.60Z" fill="#a0a0a0"/><path d="M304.95 227.80 L594.95 227.80 L594.95 282.18 L558.70 282.18 L558.70 264.05 L341.20 264.05 L341.20 554.05 L359.32 554.05 L359.32 590.30 L304.95 590.30 Z M377.45 300.30 L667.45 300.30 L667.45 662.80 L377.45 662.80 Z M413.70 336.55 L631.20 336.55 L631.20 626.55 L413.70 626.55 Z" fill="none" stroke="#9a9a9a" stroke-width="1"/><path d="M140 227.95H832M140 662.95H832" stroke="#2d9c9c" stroke-width="2.1"/><path d="M268.45 150V740M703.45 150V740" stroke="#3cc4c4" stroke-width="1.3"/><rect x="305.05" y="227.80" width="362.50" height="435.00" fill="none" stroke="#979797" stroke-width="1"/><rect x="301.65" y="224.10" width="7.2" height="7.2" fill="#111" stroke="#d8d8d8" stroke-width="1.6"/><rect x="304.45" y="226.90" width="1.6" height="1.6" fill="#888"/><rect x="482.90" y="224.10" width="7.2" height="7.2" fill="#111" stroke="#d8d8d8" stroke-width="1.6"/><rect x="485.70" y="226.90" width="1.6" height="1.6" fill="#888"/><rect x="664.15" y="224.10" width="7.2" height="7.2" fill="#111" stroke="#d8d8d8" stroke-width="1.6"/><rect x="666.95" y="226.90" width="1.6" height="1.6" fill="#888"/><rect x="301.65" y="441.60" width="7.2" height="7.2" fill="#111" stroke="#d8d8d8" stroke-width="1.6"/><rect x="304.45" y="444.40" width="1.6" height="1.6" fill="#888"/><rect x="664.15" y="441.60" width="7.2" height="7.2" fill="#111" stroke="#d8d8d8" stroke-width="1.6"/><rect x="666.95" y="444.40" width="1.6" height="1.6" fill="#888"/><rect x="301.65" y="659.10" width="7.2" height="7.2" fill="#111" stroke="#d8d8d8" stroke-width="1.6"/><rect x="304.45" y="661.90" width="1.6" height="1.6" fill="#888"/><rect x="482.90" y="659.10" width="7.2" height="7.2" fill="#111" stroke="#d8d8d8" stroke-width="1.6"/><rect x="485.70" y="661.90" width="1.6" height="1.6" fill="#888"/><rect x="664.15" y="659.10" width="7.2" height="7.2" fill="#111" stroke="#d8d8d8" stroke-width="1.6"/><rect x="666.95" y="661.90" width="1.6" height="1.6" fill="#888"/></svg>
<div style="left:832px;top:132.7px;width:18px;height:607.3px;background:linear-gradient(90deg,#c3c3c3,#e6e6e6 30%,#f2f2f2 55%,#d8d8d8);border-radius:3px 3px 0 0"></div>
<div style="left:832px;top:740px;width:18px;height:19px;background:#bdbdbd"></div>
<div style="left:122px;top:739.8px;width:710px;height:19.2px;background:linear-gradient(#c6c6c6,#b4b4b4 50%,#ababab);border-top:1.2px solid #585858"></div>
<div style="left:122px;top:740.5px;width:68px;height:18.5px;background:linear-gradient(#ececec,#e2e2e2)"></div>
<div style="left:190px;top:740.5px;width:1px;height:18.5px;background:#8a8a8a"></div>
<div style="left:216.4px;top:740.5px;width:1px;height:18.5px;background:#9a9a9a"></div>
<svg style="position:absolute;left:196px;top:743px;" width="16" height="14" viewBox="196 743 16 14"><circle cx="203.8" cy="749.7" r="5.9" fill="none" stroke="#2a2a2a" stroke-width="1.1"/><path d="M200.8 746.5V752.6H206.6V749.5L205 747.8H203.3V751" fill="none" stroke="#2a2a2a" stroke-width="1"/></svg>
<div class="t" style="left:-143.8px;width:600px;text-align:center;top:744.93px;font-size:11.3px;line-height:11.3px;color:#1a1a1a;font-weight:normal;letter-spacing:0px;">3200%</div>
<div class="t" style="left:13.600000000000023px;width:600px;text-align:center;top:744.93px;font-size:11.3px;line-height:11.3px;color:#1a1a1a;font-weight:normal;letter-spacing:0px;">Doc: 3.00K/0 bytes</div>
<div style="left:410.8px;top:740.5px;width:14px;height:18.5px;background:linear-gradient(#c8c8c8,#b3b3b3);border-left:1px solid #8e8e8e;border-right:1px solid #8e8e8e"></div>
<svg style="position:absolute;left:412px;top:743px;" width="12" height="14" viewBox="412 743 12 14"><path d="M414.6 745.5 L420.8 749.7 L414.6 753.9Z" fill="#1c1c1c"/></svg>
<div style="left:425px;top:740.5px;width:407px;height:18.5px;background:linear-gradient(#e9e9e9,#f4f4f4 45%,#dcdcdc)"></div>
<div style="left:850px;top:110px;width:2.5px;height:650px;background:#4f4f4f"></div>
<div style="left:852.5px;top:110px;width:43px;height:13px;background:linear-gradient(#7c7c7c,#6c6c6c)"></div>
<div style="left:852.5px;top:123px;width:43px;height:636px;background:#b9b9b9"></div>
<div style="left:895.5px;top:110px;width:2.5px;height:650px;background:#4f4f4f"></div>
<svg style="position:absolute;left:880px;top:112px;" width="14" height="10" viewBox="880 112 14 10"><path d="M885.5 113.5 L882.5 116.2 L885.5 118.9Z M889.8 113.5 L886.8 116.2 L889.8 118.9Z" fill="#3c3c3c"/></svg>
<div style="left:852.5px;top:168.2px;width:43px;height:1.8px;background:#5a5a5a"></div>
<svg style="position:absolute;left:862px;top:127px;" width="26" height="6" viewBox="862 127 26 6"><rect x="863.20" y="128.6" width="1.2" height="2.8" fill="#5e5e5e"/><rect x="865.33" y="128.6" width="1.2" height="2.8" fill="#5e5e5e"/><rect x="867.46" y="128.6" width="1.2" height="2.8" fill="#5e5e5e"/><rect x="869.59" y="128.6" width="1.2" height="2.8" fill="#5e5e5e"/><rect x="871.72" y="128.6" width="1.2" height="2.8" fill="#5e5e5e"/><rect x="873.85" y="128.6" width="1.2" height="2.8" fill="#5e5e5e"/><rect x="875.98" y="128.6" width="1.2" height="2.8" fill="#5e5e5e"/><rect x="878.11" y="128.6" width="1.2" height="2.8" fill="#5e5e5e"/><rect x="880.24" y="128.6" width="1.2" height="2.8" fill="#5e5e5e"/><rect x="882.37" y="128.6" width="1.2" height="2.8" fill="#5e5e5e"/><rect x="884.50" y="128.6" width="1.2" height="2.8" fill="#5e5e5e"/><rect x="863" y="131.4" width="22.6" height="0.8" fill="#d2d2d2"/></svg>
<div style="left:852.5px;top:123px;width:43px;height:1px;background:#d0d0d0"></div>
<div style="left:852.5px;top:214.6px;width:43px;height:1.8px;background:#5a5a5a"></div>
<svg style="position:absolute;left:862px;top:173.2px;" width="26" height="6" viewBox="862 173.2 26 6"><rect x="863.20" y="174.8" width="1.2" height="2.8" fill="#5e5e5e"/><rect x="865.33" y="174.8" width="1.2" height="2.8" fill="#5e5e5e"/><rect x="867.46" y="174.8" width="1.2" height="2.8" fill="#5e5e5e"/><rect x="869.59" y="174.8" width="1.2" height="2.8" fill="#5e5e5e"/><rect x="871.72" y="174.8" width="1.2" height="2.8" fill="#5e5e5e"/><rect x="873.85" y="174.8" width="1.2" height="2.8" fill="#5e5e5e"/><rect x="875.98" y="174.8" width="1.2" height="2.8" fill="#5e5e5e"/><rect x="878.11" y="174.8" width="1.2" height="2.8" fill="#5e5e5e"/><rect x="880.24" y="174.8" width="1.2" height="2.8" fill="#5e5e5e"/><rect x="882.37" y="174.8" width="1.2" height="2.8" fill="#5e5e5e"/><rect x="884.50" y="174.8" width="1.2" height="2.8" fill="#5e5e5e"/><rect x="863" y="177.6" width="22.6" height="0.8" fill="#d2d2d2"/></svg>
<div style="left:852.5px;top:169.2px;width:43px;height:1px;background:#d0d0d0"></div>
<div style="left:852.5px;top:325px;width:43px;height:1.8px;background:#5a5a5a"></div>
<svg style="position:absolute;left:862px;top:219.89999999999998px;" width="26" height="6" viewBox="862 219.89999999999998 26 6"><rect x="863.20" y="221.5" width="1.2" height="2.8" fill="#5e5e5e"/><rect x="865.33" y="221.5" width="1.2" height="2.8" fill="#5e5e5e"/><rect x="867.46" y="221.5" width="1.2" height="2.8" fill="#5e5e5e"/><rect x="869.59" y="221.5" width="1.2" height="2.8" fill="#5e5e5e"/><rect x="871.72" y="221.5" width="1.2" height="2.8" fill="#5e5e5e"/><rect x="873.85" y="221.5" width="1.2" height="2.8" fill="#5e5e5e"/><rect x="875.98" y="221.5" width="1.2" height="2.8" fill="#5e5e5e"/><rect x="878.11" y="221.5" width="1.2" height="2.8" fill="#5e5e5e"/><rect x="880.24" y="221.5" width="1.2" height="2.8" fill="#5e5e5e"/><rect x="882.37" y="221.5" width="1.2" height="2.8" fill="#5e5e5e"/><rect x="884.50" y="221.5" width="1.2" height="2.8" fill="#5e5e5e"/><rect x="863" y="224.3" width="22.6" height="0.8" fill="#d2d2d2"/></svg>
<div style="left:852.5px;top:215.89999999999998px;width:43px;height:1px;background:#d0d0d0"></div>
<div style="left:852.5px;top:402.6px;width:43px;height:1.8px;background:#5a5a5a"></div>
<svg style="position:absolute;left:862px;top:330.0px;" width="26" height="6" viewBox="862 330.0 26 6"><rect x="863.20" y="331.6" width="1.2" height="2.8" fill="#5e5e5e"/><rect x="865.33" y="331.6" width="1.2" height="2.8" fill="#5e5e5e"/><rect x="867.46" y="331.6" width="1.2" height="2.8" fill="#5e5e5e"/><rect x="869.59" y="331.6" width="1.2" height="2.8" fill="#5e5e5e"/><rect x="871.72" y="331.6" width="1.2" height="2.8" fill="#5e5e5e"/><rect x="873.85" y="331.6" width="1.2" height="2.8" fill="#5e5e5e"/><rect x="875.98" y="331.6" width="1.2" height="2.8" fill="#5e5e5e"/><rect x="878.11" y="331.6" width="1.2" height="2.8" fill="#5e5e5e"/><rect x="880.24" y="331.6" width="1.2" height="2.8" fill="#5e5e5e"/><rect x="882.37" y="331.6" width="1.2" height="2.8" fill="#5e5e5e"/><rect x="884.50" y="331.6" width="1.2" height="2.8" fill="#5e5e5e"/><rect x="863" y="334.4" width="22.6" height="0.8" fill="#d2d2d2"/></svg>
<div style="left:852.5px;top:326.0px;width:43px;height:1px;background:#d0d0d0"></div>
<div style="left:852.5px;top:482px;width:43px;height:1.8px;background:#5a5a5a"></div>
<svg style="position:absolute;left:862px;top:408.59999999999997px;" width="26" height="6" viewBox="862 408.59999999999997 26 6"><rect x="863.20" y="410.2" width="1.2" height="2.8" fill="#5e5e5e"/><rect x="865.33" y="410.2" width="1.2" height="2.8" fill="#5e5e5e"/><rect x="867.46" y="410.2" width="1.2" height="2.8" fill="#5e5e5e"/><rect x="869.59" y="410.2" width="1.2" height="2.8" fill="#5e5e5e"/><rect x="871.72" y="410.2" width="1.2" height="2.8" fill="#5e5e5e"/><rect x="873.85" y="410.2" width="1.2" height="2.8" fill="#5e5e5e"/><rect x="875.98" y="410.2" width="1.2" height="2.8" fill="#5e5e5e"/><rect x="878.11" y="410.2" width="1.2" height="2.8" fill="#5e5e5e"/><rect x="880.24" y="410.2" width="1.2" height="2.8" fill="#5e5e5e"/><rect x="882.37" y="410.2" width="1.2" height="2.8" fill="#5e5e5e"/><rect x="884.50" y="410.2" width="1.2" height="2.8" fill="#5e5e5e"/><rect x="863" y="413.0" width="22.6" height="0.8" fill="#d2d2d2"/></svg>
<div style="left:852.5px;top:404.59999999999997px;width:43px;height:1px;background:#d0d0d0"></div>
<div style="left:852.5px;top:527.5px;width:43px;height:1.8px;background:#5a5a5a"></div>
<svg style="position:absolute;left:862px;top:486.7px;" width="26" height="6" viewBox="862 486.7 26 6"><rect x="863.20" y="488.3" width="1.2" height="2.8" fill="#5e5e5e"/><rect x="865.33" y="488.3" width="1.2" height="2.8" fill="#5e5e5e"/><rect x="867.46" y="488.3" width="1.2" height="2.8" fill="#5e5e5e"/><rect x="869.59" y="488.3" width="1.2" height="2.8" fill="#5e5e5e"/><rect x="871.72" y="488.3" width="1.2" height="2.8" fill="#5e5e5e"/><rect x="873.85" y="488.3" width="1.2" height="2.8" fill="#5e5e5e"/><rect x="875.98" y="488.3" width="1.2" height="2.8" fill="#5e5e5e"/><rect x="878.11" y="488.3" width="1.2" height="2.8" fill="#5e5e5e"/><rect x="880.24" y="488.3" width="1.2" height="2.8" fill="#5e5e5e"/><rect x="882.37" y="488.3" width="1.2" height="2.8" fill="#5e5e5e"/><rect x="884.50" y="488.3" width="1.2" height="2.8" fill="#5e5e5e"/><rect x="863" y="491.1" width="22.6" height="0.8" fill="#d2d2d2"/></svg>
<div style="left:852.5px;top:482.7px;width:43px;height:1px;background:#d0d0d0"></div>
<div style="left:898px;top:110px;width:345px;height:13px;background:linear-gradient(#7c7c7c,#6c6c6c)"></div>
<svg style="position:absolute;left:1226px;top:112px;" width="14" height="10" viewBox="1226 112 14 10"><path d="M1230.5 113.5 L1233.5 116.2 L1230.5 118.9Z M1234.8 113.5 L1237.8 116.2 L1234.8 118.9Z" fill="#3c3c3c"/></svg>
<div style="left:1241.5px;top:110px;width:1.5px;height:650px;background:#3a3a3a"></div>
<div style="left:898px;top:123px;width:343.5px;height:20.19999999999999px;background:linear-gradient(#858585,#8e8e8e)"></div>
<div style="left:898px;top:123.5px;width:66.20000000000005px;height:19.69999999999999px;background:linear-gradient(#8f8f8f,#868686);border-right:1px solid #6e6e6e;border-top:1px solid #9a9a9a"></div>
<div class="t" style="left:906.9px;top:128.80px;font-size:10.4px;line-height:10.4px;color:#1c1c1c;font-weight:bold;letter-spacing:0.35px;">Navigator</div>
<div style="left:964.2px;top:123.5px;width:71.0px;height:19.69999999999999px;background:linear-gradient(#8f8f8f,#868686);border-right:1px solid #6e6e6e;border-top:1px solid #9a9a9a"></div>
<div class="t" style="left:973.6px;top:128.80px;font-size:10.4px;line-height:10.4px;color:#1c1c1c;font-weight:bold;letter-spacing:0.35px;">Histogram</div>
<div style="left:1035.2px;top:123.5px;width:36.0px;height:19.69999999999999px;background:linear-gradient(#c6c6c6,#bababa);border-top:1px solid #d9d9d9"></div>
<div class="t" style="left:1044px;top:128.80px;font-size:10.4px;line-height:10.4px;color:#1c1c1c;font-weight:bold;letter-spacing:0.35px;">Info</div>
<div style="left:898px;top:123px;width:343.5px;height:1px;background:#a2a2a2"></div>
<svg style="position:absolute;left:1218px;top:127px;" width="22" height="12" viewBox="1218 127 22 12"><path d="M1222 131.2 L1226.6 131.2 L1224.3 133.8Z" fill="#2a2a2a"/><path d="M1228.3 129.4H1237.4M1228.3 131.4H1237.4M1228.3 133.4H1237.4M1228.3 135.4H1237.4" stroke="#333" stroke-width="0.9"/></svg>
<div style="left:898px;top:143.2px;width:343.5px;height:241px;background:#b9b9b9"></div>
<div style="left:1067.3px;top:145px;width:1px;height:72.5px;background:#8a8a8a"></div>
<div style="left:1068.3px;top:145px;width:1px;height:72.5px;background:#cdcdcd"></div>
<div style="left:898px;top:220px;width:343.5px;height:1.4px;background:#838383"></div>
<div style="left:898px;top:221.4px;width:343.5px;height:1px;background:#cacaca"></div>
<div style="left:1067.3px;top:223.2px;width:1px;height:34.4px;background:#8a8a8a"></div>
<div style="left:1068.3px;top:223.2px;width:1px;height:34.4px;background:#cdcdcd"></div>
<div style="left:898px;top:259.4px;width:343.5px;height:1.4px;background:#838383"></div>
<div style="left:898px;top:260.8px;width:343.5px;height:1px;background:#cacaca"></div>
<div style="left:898px;top:290.6px;width:343.5px;height:1.4px;background:#838383"></div>
<div style="left:898px;top:292px;width:343.5px;height:1px;background:#cacaca"></div>
<div class="t" style="left:938.6px;top:155.20px;font-size:10.4px;line-height:10.4px;color:#1c1c1c;font-weight:normal;letter-spacing:0px;">R :</div>
<div class="t" style="left:938.6px;top:167.60px;font-size:10.4px;line-height:10.4px;color:#1c1c1c;font-weight:normal;letter-spacing:0px;">G :</div>
<div class="t" style="left:938.6px;top:180.00px;font-size:10.4px;line-height:10.4px;color:#1c1c1c;font-weight:normal;letter-spacing:0px;">B :</div>
<div class="t" style="left:925px;top:205.00px;font-size:10.4px;line-height:10.4px;color:#1c1c1c;font-weight:normal;letter-spacing:0px;">8-bit</div>
<div class="t" style="left:1106px;top:155.20px;font-size:10.4px;line-height:10.4px;color:#1c1c1c;font-weight:normal;letter-spacing:0px;">W :</div>
<div class="t" style="right:99.29999999999995px;top:155.20px;font-size:10.4px;line-height:10.4px;color:#1c1c1c;font-weight:normal;letter-spacing:0px;text-align:right;">100.0%</div>
<div class="t" style="left:1106px;top:167.60px;font-size:10.4px;line-height:10.4px;color:#1c1c1c;font-weight:normal;letter-spacing:0px;">H :</div>
<div class="t" style="right:99.29999999999995px;top:167.60px;font-size:10.4px;line-height:10.4px;color:#1c1c1c;font-weight:normal;letter-spacing:0px;text-align:right;">100.0%</div>
<div class="t" style="left:1106px;top:180.00px;font-size:10.4px;line-height:10.4px;color:#1c1c1c;font-weight:normal;letter-spacing:0px;">A :</div>
<div class="t" style="right:99.29999999999995px;top:180.00px;font-size:10.4px;line-height:10.4px;color:#1c1c1c;font-weight:normal;letter-spacing:0px;text-align:right;">0.0°</div>
<div class="t" style="left:1106px;top:192.40px;font-size:10.4px;line-height:10.4px;color:#1c1c1c;font-weight:normal;letter-spacing:0px;">H :</div>
<div class="t" style="right:99.29999999999995px;top:192.40px;font-size:10.4px;line-height:10.4px;color:#1c1c1c;font-weight:normal;letter-spacing:0px;text-align:right;">0.0°</div>
<div class="t" style="left:938.6px;top:230.00px;font-size:10.4px;line-height:10.4px;color:#1c1c1c;font-weight:normal;letter-spacing:0px;">X :</div>
<div class="t" style="left:938.6px;top:242.40px;font-size:10.4px;line-height:10.4px;color:#1c1c1c;font-weight:normal;letter-spacing:0px;">Y :</div>
<div class="t" style="right:281px;top:230.00px;font-size:10.4px;line-height:10.4px;color:#1c1c1c;font-weight:normal;letter-spacing:0px;text-align:right;">6.0</div>
<div class="t" style="right:281px;top:242.40px;font-size:10.4px;line-height:10.4px;color:#1c1c1c;font-weight:normal;letter-spacing:0px;text-align:right;">4.0</div>
<div class="t" style="left:1106px;top:230.00px;font-size:10.4px;line-height:10.4px;color:#1c1c1c;font-weight:normal;letter-spacing:0px;">W :</div>
<div class="t" style="left:1106px;top:242.40px;font-size:10.4px;line-height:10.4px;color:#1c1c1c;font-weight:normal;letter-spacing:0px;">H :</div>
<div class="t" style="right:106px;top:230.00px;font-size:10.4px;line-height:10.4px;color:#1c1c1c;font-weight:normal;letter-spacing:0px;text-align:right;">20.0</div>
<div class="t" style="right:106px;top:242.40px;font-size:10.4px;line-height:10.4px;color:#1c1c1c;font-weight:normal;letter-spacing:0px;text-align:right;">24.0</div>
<div class="t" style="left:910px;top:273.23px;font-size:11.3px;line-height:11.3px;color:#1c1c1c;font-weight:normal;letter-spacing:0px;">Doc: 3.00K/0 bytes</div>
<div class="t" style="left:909.6px;top:304.03px;font-size:11.3px;line-height:11.3px;color:#1c1c1c;font-weight:normal;letter-spacing:0.06px;">Click and drag to move guide constraining to ruler tics.</div>
<div style="left:898px;top:383.5px;width:343.5px;height:3.5px;background:#5c5c5c"></div>
<div style="left:898px;top:387px;width:343.5px;height:19.399999999999977px;background:linear-gradient(#858585,#8e8e8e)"></div>
<div style="left:898px;top:387.5px;width:43.89999999999998px;height:18.899999999999977px;background:linear-gradient(#c6c6c6,#bababa);border-top:1px solid #d9d9d9"></div>
<div class="t" style="left:906.5px;top:393.00px;font-size:10.4px;line-height:10.4px;color:#1c1c1c;font-weight:bold;letter-spacing:0.35px;">Color</div>
<div style="left:941.9px;top:387.5px;width:63.30000000000007px;height:18.899999999999977px;background:linear-gradient(#8f8f8f,#868686);border-right:1px solid #6e6e6e;border-top:1px solid #9a9a9a"></div>
<div class="t" style="left:949.5px;top:393.00px;font-size:10.4px;line-height:10.4px;color:#1c1c1c;font-weight:bold;letter-spacing:0.35px;">Swatches</div>
<div style="left:1005.2px;top:387.5px;width:47.200000000000045px;height:18.899999999999977px;background:linear-gradient(#8f8f8f,#868686);border-right:1px solid #6e6e6e;border-top:1px solid #9a9a9a"></div>
<div class="t" style="left:1013.5px;top:393.00px;font-size:10.4px;line-height:10.4px;color:#1c1c1c;font-weight:bold;letter-spacing:0.35px;">Styles</div>
<div style="left:898px;top:387px;width:343.5px;height:1px;background:#a2a2a2"></div>
<svg style="position:absolute;left:1218px;top:391px;" width="22" height="12" viewBox="1218 391 22 12"><path d="M1222 395.2 L1226.6 395.2 L1224.3 397.8Z" fill="#2a2a2a"/><path d="M1228.3 393.4H1237.4M1228.3 395.4H1237.4M1228.3 397.4H1237.4M1228.3 399.4H1237.4" stroke="#333" stroke-width="0.9"/></svg>
<div style="left:898px;top:406.4px;width:343.5px;height:110.5px;background:#b9b9b9"></div>
<div style="left:916px;top:428.2px;width:22px;height:21px;background:#000;border:1px solid #777;box-shadow:0 0 0 1px #ddd inset"></div>
<div style="left:904.2px;top:416.5px;width:22.6px;height:21.3px;background:rgb(69,131,195);border:2px solid #f4f4f4;outline:1px solid #777"></div>
<div class="t" style="left:946.8px;top:420.80px;font-size:10.4px;line-height:10.4px;color:#1c1c1c;font-weight:normal;letter-spacing:0px;">R</div>
<div style="left:961.5px;top:416.0px;width:106.5px;height:5px;background:linear-gradient(90deg,rgb(0,131,195),rgb(255,131,195));border:1px solid #7a7a7a"></div>
<svg style="position:absolute;left:982.7px;top:420.0px;" width="14" height="14" viewBox="982.7 420.0 14 14"><path d="M984.2 432.0 V428.0 L989.7 422.2 L995.2 428.0 V432.0 Z" fill="#e9e9e9" stroke="#4a4a4a" stroke-width="1"/></svg>
<div style="left:1075.6px;top:415.4px;width:35.4px;height:18.3px;background:linear-gradient(#e4e4e4,#f0f0f0 30%);border:1px solid #6f6f6f"></div>
<div class="t" style="left:1080.5px;top:420.49px;font-size:11px;line-height:11px;color:#141414;font-weight:normal;letter-spacing:0px;">69</div>
<div class="t" style="left:946.8px;top:446.70px;font-size:10.4px;line-height:10.4px;color:#1c1c1c;font-weight:normal;letter-spacing:0px;">G</div>
<div style="left:961.5px;top:441.9px;width:106.5px;height:5px;background:linear-gradient(90deg,rgb(69,0,195),rgb(69,255,195));border:1px solid #7a7a7a"></div>
<svg style="position:absolute;left:1008.6px;top:445.9px;" width="14" height="14" viewBox="1008.6 445.9 14 14"><path d="M1010.1 457.9 V453.9 L1015.6 448.09999999999997 L1021.1 453.9 V457.9 Z" fill="#e9e9e9" stroke="#4a4a4a" stroke-width="1"/></svg>
<div style="left:1075.6px;top:441.29999999999995px;width:35.4px;height:18.3px;background:linear-gradient(#e4e4e4,#f0f0f0 30%);border:1px solid #6f6f6f"></div>
<div class="t" style="left:1080.5px;top:446.39px;font-size:11px;line-height:11px;color:#141414;font-weight:normal;letter-spacing:0px;">131</div>
<div class="t" style="left:946.8px;top:472.60px;font-size:10.4px;line-height:10.4px;color:#1c1c1c;font-weight:normal;letter-spacing:0px;">B</div>
<div style="left:961.5px;top:467.8px;width:106.5px;height:5px;background:linear-gradient(90deg,rgb(69,131,0),rgb(69,131,255));border:1px solid #7a7a7a"></div>
<svg style="position:absolute;left:1036px;top:471.8px;" width="14" height="14" viewBox="1036 471.8 14 14"><path d="M1037.5 483.8 V479.8 L1043 474.0 L1048.5 479.8 V483.8 Z" fill="#e9e9e9" stroke="#4a4a4a" stroke-width="1"/></svg>
<div style="left:1075.6px;top:467.2px;width:35.4px;height:18.3px;background:linear-gradient(#e4e4e4,#f0f0f0 30%);border:1px solid #6f6f6f"></div>
<div class="t" style="left:1080.5px;top:472.29px;font-size:11px;line-height:11px;color:#141414;font-weight:normal;letter-spacing:0px;">195</div>
<div style="left:902.8px;top:494.6px;width:225.2px;height:16.9px;background:linear-gradient(rgba(255,255,255,.62),rgba(255,255,255,0) 48%,rgba(0,0,0,0) 52%,rgba(0,0,0,.95)),linear-gradient(90deg,#e8202a 0%,#f08a30 9%,#f7e22c 19%,#7cba30 29%,#0a9848 37%,#0a9c9a 45%,#08aae2 52%,#1d62aa 62%,#27297a 69%,#7d3a98 77%,#da218a 86%,#e81e5a 93%,#c81420 100%);border:1px solid #888"></div>
<div style="left:1119px;top:494.6px;width:9px;height:8.5px;background:#fff"></div>
<div style="left:1119px;top:503px;width:9px;height:8.5px;background:#000"></div>
<div style="left:898px;top:516.5px;width:343.5px;height:2.5px;background:#5c5c5c"></div>
<div style="left:898px;top:519px;width:343.5px;height:18.299999999999955px;background:linear-gradient(#858585,#8e8e8e)"></div>
<div style="left:898px;top:519.5px;width:49.299999999999955px;height:17.799999999999955px;background:linear-gradient(#c6c6c6,#bababa);border-top:1px solid #d9d9d9"></div>
<div class="t" style="left:906.6px;top:523.70px;font-size:10.4px;line-height:10.4px;color:#1c1c1c;font-weight:bold;letter-spacing:0.35px;">Layers</div>
<div style="left:947.3px;top:519.5px;width:64.20000000000005px;height:17.799999999999955px;background:linear-gradient(#8f8f8f,#868686);border-right:1px solid #6e6e6e;border-top:1px solid #9a9a9a"></div>
<div class="t" style="left:955.2px;top:523.70px;font-size:10.4px;line-height:10.4px;color:#1c1c1c;font-weight:bold;letter-spacing:0.35px;">Channels</div>
<div style="left:1011.5px;top:519.5px;width:44.200000000000045px;height:17.799999999999955px;background:linear-gradient(#8f8f8f,#868686);border-right:1px solid #6e6e6e;border-top:1px solid #9a9a9a"></div>
<div class="t" style="left:1020px;top:523.70px;font-size:10.4px;line-height:10.4px;color:#1c1c1c;font-weight:bold;letter-spacing:0.35px;">Paths</div>
<div style="left:898px;top:519px;width:343.5px;height:1px;background:#a2a2a2"></div>
<svg style="position:absolute;left:1218px;top:523px;" width="22" height="12" viewBox="1218 523 22 12"><path d="M1222 527.2 L1226.6 527.2 L1224.3 529.8Z" fill="#2a2a2a"/><path d="M1228.3 525.4H1237.4M1228.3 527.4H1237.4M1228.3 529.4H1237.4M1228.3 531.4H1237.4" stroke="#333" stroke-width="0.9"/></svg>
<div style="left:898px;top:537.3px;width:343.5px;height:222px;background:#b9b9b9"></div>
<div style="left:903.6px;top:544.7px;width:71.60000000000002px;height:17.699999999999932px;background:linear-gradient(#d2d2d2,#bdbdbd);border:1px solid #8a8a8a;border-radius:3px"></div>
<div class="t" style="left:927.2px;top:549.36px;font-size:10.8px;line-height:10.8px;color:#3a3a3a;font-weight:normal;letter-spacing:0px;">Kind</div>
<svg style="position:absolute;left:910px;top:546px;" width="14" height="14" viewBox="910 546 14 14"><circle cx="919.4" cy="551.8" r="3.6" fill="none" stroke="#555" stroke-width="1.2"/><path d="M916.8 554.6 L913.4 558.6" stroke="#555" stroke-width="1.7" stroke-linecap="round"/></svg>
<svg style="position:absolute;left:962px;top:546px;" width="12" height="16" viewBox="962 546 12 16"><path d="M965.2 551.6 L967.8 548.6 L970.4 551.6Z M965.2 555.4 L967.8 558.4 L970.4 555.4Z" fill="#3a3a3a"/></svg>
<div style="left:898px;top:568.2px;width:343.5px;height:1px;background:#9a9a9a"></div>
<div style="left:903.6px;top:576.3px;width:129.10000000000002px;height:17.700000000000045px;background:linear-gradient(#d2d2d2,#bdbdbd);border:1px solid #8a8a8a;border-radius:3px"></div>
<div class="t" style="left:911px;top:580.96px;font-size:10.8px;line-height:10.8px;color:#3a3a3a;font-weight:normal;letter-spacing:0px;">Normal</div>
<svg style="position:absolute;left:1019px;top:577px;" width="12" height="16" viewBox="1019 577 12 16"><path d="M1021.4 583.2 L1024 580.2 L1026.6 583.2Z M1021.4 587 L1024 590 L1026.6 587Z" fill="#3a3a3a"/></svg>
<div class="t" style="left:1038.3px;top:582.46px;font-size:10.8px;line-height:10.8px;color:#444;font-weight:normal;letter-spacing:0px;">Opacity:</div>
<div style="left:1082.4px;top:577.7px;width:53.2px;height:16.299999999999955px;background:#bdbdbd;border:1px solid #8e8e8e;border-radius:2px"></div>
<div style="left:1118px;top:577.7px;width:1px;height:16.299999999999955px;background:#8e8e8e"></div>
<div class="t" style="left:1087.5px;top:582.16px;font-size:10.8px;line-height:10.8px;color:#8a8a8a;font-weight:normal;letter-spacing:0px;">100%</div>
<svg style="position:absolute;left:1122px;top:581.7px;" width="12" height="8" viewBox="1122 581.7 12 8"><path d="M1124.6 584.0 L1129.8 584.0 L1127.2 587.0Z" fill="#444"/></svg>
<div style="left:898px;top:601px;width:343.5px;height:1px;background:#9a9a9a"></div>
<div class="t" style="left:904.2px;top:614.06px;font-size:10.8px;line-height:10.8px;color:#444;font-weight:normal;letter-spacing:0px;">Lock:</div>
<div class="t" style="left:1061.4px;top:614.06px;font-size:10.8px;line-height:10.8px;color:#444;font-weight:normal;letter-spacing:0px;">Fill:</div>
<div style="left:1082.4px;top:609.6px;width:53.2px;height:16.399999999999977px;background:#bdbdbd;border:1px solid #8e8e8e;border-radius:2px"></div>
<div style="left:1118px;top:609.6px;width:1px;height:16.399999999999977px;background:#8e8e8e"></div>
<div class="t" style="left:1087.5px;top:614.06px;font-size:10.8px;line-height:10.8px;color:#8a8a8a;font-weight:normal;letter-spacing:0px;">100%</div>
<svg style="position:absolute;left:1122px;top:613.6px;" width="12" height="8" viewBox="1122 613.6 12 8"><path d="M1124.6 615.9 L1129.8 615.9 L1127.2 618.9Z" fill="#444"/></svg>
<div style="left:898px;top:635px;width:327px;height:89.3px;background:#b9b9b9"></div>
<div style="left:898px;top:634.2px;width:343.5px;height:1px;background:#8a8a8a"></div>
<div style="left:933.7px;top:635px;width:291.3px;height:44.5px;background:#a8b8d9"></div>
<div style="left:898px;top:679.2px;width:327px;height:1px;background:#9a9a9a"></div>
<div style="left:898px;top:723.8px;width:327px;height:1px;background:#9a9a9a"></div>
<div style="left:933.2px;top:635px;width:1px;height:89px;background:#9a9a9a"></div>
<div style="left:898px;top:724.5px;width:327px;height:12px;background:#a9a9a9"></div>
<div style="left:1225px;top:635px;width:16.5px;height:101.5px;background:linear-gradient(90deg,#cfcfcf,#f2f2f2 45%,#e6e6e6)"></div>
<div class="t" style="left:978px;top:655.46px;font-size:10.8px;line-height:10.8px;color:#1c1c1c;font-weight:normal;letter-spacing:0px;">Shape 2</div>
<div class="t" style="left:982.3px;top:698.86px;font-size:10.8px;line-height:10.8px;color:#1c1c1c;font-weight:normal;letter-spacing:0px;">Color Fill 1</div>
<svg style="position:absolute;left:907px;top:651.4px;" width="18" height="12" viewBox="907 651.4 18 12"><path d="M908.9 657.6 Q915.5 650.1999999999999 922.2 657.6 Q915.5 663.6 908.9 657.6Z" fill="#e2e2e2" stroke="#222" stroke-width="1.3"/><circle cx="915.5" cy="657.0" r="2.8" fill="#333"/><circle cx="916.4" cy="656.1999999999999" r="0.9" fill="#ddd"/></svg>
<svg style="position:absolute;left:907px;top:695.6px;" width="18" height="12" viewBox="907 695.6 18 12"><path d="M908.9 701.8000000000001 Q915.5 694.4 922.2 701.8000000000001 Q915.5 707.8000000000001 908.9 701.8000000000001Z" fill="#e2e2e2" stroke="#222" stroke-width="1.3"/><circle cx="915.5" cy="701.2" r="2.8" fill="#333"/><circle cx="916.4" cy="700.4" r="0.9" fill="#ddd"/></svg>
<div style="left:937px;top:683.3px;width:35px;height:35px;background:#000;border:1px solid #444"></div>
<div style="left:938px;top:708.7px;width:33px;height:8.8px;background:#e6e6e6"></div>
<svg style="position:absolute;left:938px;top:708px;" width="33" height="11" viewBox="938 708 33 11"><path d="M941 711.5H968" stroke="#222" stroke-width="1"/><path d="M951.5 716.5 L954.5 713 L957.5 716.5Z" fill="#111"/></svg>
<svg style="position:absolute;left:934px;top:636px;" width="38" height="44" viewBox="934 636 38 44"><defs><pattern id="chk" x="937.6" y="639.7" width="4.6" height="4.6" patternUnits="userSpaceOnUse"><rect width="4.6" height="4.6" fill="#111"/><rect width="2.3" height="2.3" fill="#4a4a4a"/><rect x="2.3" y="2.3" width="2.3" height="2.3" fill="#4a4a4a"/></pattern></defs><path d="M937.6 639.7 H968.3 V660.6 H953.6 V674.8 H937.6 Z" fill="url(#chk)"/><path d="M953.6 660.6 V674.8 M953.6 660.6 H968.3" stroke="#333" stroke-width=".8"/><path d="M948.6 654.6 H960.6 V659.8 H953.6 V668.6 H948.6 Z" fill="#9a9a9a"/><path d="M942.2 666.6 V644.4 H958.6 V646.6" fill="none" stroke="#fff" stroke-width="2.6"/><rect x="957.4" y="643.2" width="2.6" height="3.6" fill="#fff"/><path d="M947.2 672 V649.1 H964 V659.5" fill="none" stroke="#fff" stroke-width="2.5"/><path d="M946 670.8 H953.6" stroke="#fff" stroke-width="2.4"/><rect x="956.6" y="663.6" width="9.3" height="9" fill="#b9c6e2" stroke="#2a3550" stroke-width="1"/><circle cx="956.6" cy="663.6" r="1.3" fill="#2a3550"/><circle cx="956.6" cy="672.6" r="1.3" fill="#2a3550"/><circle cx="965.9" cy="663.6" r="1.3" fill="#2a3550"/><circle cx="965.9" cy="672.6" r="1.3" fill="#2a3550"/><path d="M935.4 649.6 V637.4 H945.6 M959.6 637.4 H970.4 V649.6 M935.4 665.6 V677.4 H945.6 M959.6 677.4 H970.4 V665.6" fill="none" stroke="#1c2644" stroke-width="1.1"/></svg>
<div style="left:898px;top:736.5px;width:343.5px;height:1.5px;background:#5c5c5c"></div>
<div style="left:898px;top:738px;width:343.5px;height:21.2px;background:linear-gradient(#c4c4c4,#b4b4b4)"></div>
<svg style="position:absolute;left:850px;top:120px;" width="393" height="640" viewBox="850 120 393 640"><path d="M865.9 141.4 H874.4 L875.6 143 H885.2 V160 H865.9 Z" fill="#3a3a3a"/><text x="866.8" y="156.6" font-family="Liberation Sans" font-size="12.4" letter-spacing="-0.3" fill="#cfcfcf">Mb</text><rect x="868.4" y="187.8" width="5.2" height="4.4" fill="#c8c8c8" stroke="#2e2e2e" stroke-width="1"/><rect x="868.4" y="194.6" width="5.2" height="4.4" fill="#c8c8c8" stroke="#2e2e2e" stroke-width="1"/><rect x="868" y="201.2" width="6" height="4.8" fill="#1e1e1e"/><path d="M877.6 204.4 Q884.6 199.6 883.2 192.4" fill="none" stroke="#222" stroke-width="1.8"/><path d="M879.8 192.8 L882.6 188.4 L886.2 192.4 Z" fill="#222"/><path d="M864.6 236.6 Q867.6 233.8 872 235 Q874.6 236.8 874.6 238 Q871 241.6 868 240.2 Q865.6 238.8 864.6 236.6Z" fill="#333"/><path d="M874 238 H885.4" stroke="#222" stroke-width="1.5"/><path d="M865.2 246.9 H879.6" stroke="#222" stroke-width="1.5"/><path d="M878.6 246.9 L884.4 241.6 Q886.4 247 884.4 252.8 Z" fill="#333"/><rect x="871.4" y="277" width="8.5" height="8.6" fill="#2e2e2e"/><path d="M873.2 277.4 L870.6 270.4 M875.4 277.4 V268 M877.8 277.4 L881 270.6" stroke="#2a2a2a" stroke-width="1.1"/><ellipse cx="870" cy="268.8" rx="3.4" ry="1.9" transform="rotate(55 870 268.8)" fill="#333"/><rect x="873.8" y="264" width="3.2" height="5.4" rx="1.4" fill="#333"/><ellipse cx="881.8" cy="269" rx="3.4" ry="1.9" transform="rotate(-40 881.8 269)" fill="#333"/><rect x="864.4" y="296.6" width="1.8" height="1.8" fill="#222"/><rect x="864.4" y="299.9" width="1.8" height="1.8" fill="#222"/><rect x="864.4" y="303.6" width="1.8" height="1.8" fill="#222"/><path d="M867.6 297.5 H872.4 M867.6 300.8 H872.4 M867.6 304.5 H870.4" stroke="#333" stroke-width="1"/><circle cx="877" cy="300.2" r="2.7" fill="#333"/><rect x="875.6" y="301.6" width="2.8" height="6" fill="#333"/><rect x="869" y="307.3" width="15.9" height="4.7" fill="#2e2e2e"/><path d="M869.6 314.5 H884.4" stroke="#333" stroke-width="1.1"/><path d="M867.6 359.8 L873.2 346.8 L879 359.8 M869.8 355 H876.8" fill="none" stroke="#222" stroke-width="1.7"/><path d="M882.5 343.4 V363.2" stroke="#222" stroke-width="1"/><path d="M873.4 377.2 H880.2 V393.4 M875.4 377.2 V393.4" fill="none" stroke="#2a2a2a" stroke-width="1.4"/><path d="M874.6 377.2 A4.6 4.3 0 0 0 874.6 385.8 Z" fill="#2a2a2a"/><rect x="867.1" y="422.2" width="15.4" height="17.1" rx="1.5" fill="#2e2e2e"/><rect x="869" y="424.2" width="6.6" height="1.6" fill="#bbb"/><rect x="869" y="426.9" width="6.6" height="1.6" fill="#bbb"/><rect x="869" y="429.4" width="6.6" height="1.4" fill="#bbb"/><rect x="876.3" y="424.2" width="4" height="6.6" fill="#bbb"/><rect x="869" y="433.4" width="11.3" height="3.3" fill="#bbb"/><path d="M867.1 453.8 H882.5 V465.6 L876.3 471.5 H867.1 Z" fill="#2e2e2e"/><path d="M876.8 471 L882 465.8 H876.8 Z" fill="#c8c8c8"/><rect x="870" y="456.9" width="9.6" height="1.6" fill="#ccc"/><rect x="870" y="460.8" width="9.6" height="1.6" fill="#ccc"/><rect x="870" y="464.2" width="5" height="1.6" fill="#ccc"/><path d="M872 499.8 L877 502.6 V508.8 L872 511.6 L867.1 508.8 V502.6 Z" fill="#555" stroke="#2a2a2a" stroke-width="1"/><path d="M867.1 502.6 L872 505.4 L877 502.6 M872 505.4 V511.6" fill="none" stroke="#2a2a2a" stroke-width=".9"/><path d="M867.1 502.6 L872 505.4 V511.6 L867.1 508.8Z" fill="#888"/><rect x="879.2" y="500.6" width="4.2" height="4.2" fill="#aaa" stroke="#333" stroke-width=".9"/><rect x="879.2" y="506.4" width="4.2" height="4.2" fill="#aaa" stroke="#333" stroke-width=".9"/><rect x="867.4" y="513.2" width="15.9" height="4.6" fill="#ddd" stroke="#333" stroke-width=".9"/><rect x="879" y="513.6" width="4" height="3.8" fill="#777"/><path d="M910.2 176.4 L916.6 170" stroke="#222" stroke-width="4.2" stroke-linecap="round"/><path d="M910.4 176.2 L916.6 170" stroke="#e2e2e2" stroke-width="2.2" stroke-linecap="round"/><path d="M915.4 167.4 L919.8 171.8" stroke="#111" stroke-width="3"/><path d="M918 169.2 L920.6 166.4" stroke="#161616" stroke-width="3.6" stroke-linecap="round"/><path d="M918.6 175.6 H922.8 L920.7 177.8 Z" fill="#111"/><rect x="1078.3" y="159.4" width="6.8" height="6.6" fill="#e0e0e0" stroke="#2a2a2a" stroke-width="1.1"/><path d="M1086.6 159.4 H1091.6 V172.8 H1078.3 V167.4" fill="none" stroke="#333" stroke-width="1" stroke-dasharray="1 1"/><path d="M1078 187.5 L1087.6 178.4 Q1090 181 1090 187.5Z" fill="#dcdcdc"/><path d="M1077.6 187.5 H1091 M1078 187.5 L1087.7 178.3 M1085.6 180.4 Q1088.8 183 1088.8 187.5" fill="none" stroke="#1e1e1e" stroke-width="1"/><path d="M1078.2 199 L1083.9 191.9 H1091.7 L1086.3 199 Z" fill="#dcdcdc" stroke="#1e1e1e" stroke-width="1.1"/><path d="M913.6 232.3 V246.8 M906.6 239.6 H921.2" stroke="#2a2a2a" stroke-width="1.2"/><path d="M918.2 245 H923.2 L920.7 247.4Z" fill="#111"/><path d="M1079 244.6 V233.6 H1090.6" fill="none" stroke="#1a1a1a" stroke-width="1.4"/><path d="M1090 231.4 L1093.2 233.6 L1090 235.8Z M1076.8 244.2 L1079 247.4 L1081.2 244.2Z" fill="#1a1a1a"/><path d="M1091.8 236.6 V246.4 H1081.6" fill="none" stroke="#333" stroke-width="1" stroke-dasharray="1 1"/><rect x="988.6" y="547.8" width="14" height="11.4" fill="#c4c4c4" stroke="#666" stroke-width="1.1"/><path d="M990.4 557.6 L993.4 553.4 L995.4 555.6 L997.2 553.6 L1000.8 557.6Z" fill="#666"/><circle cx="998.8" cy="550.6" r="1.1" fill="#666"/><circle cx="1022.5" cy="553.1" r="5.6" fill="#a8a8a8" stroke="#6a6a6a" stroke-width="1.1"/><path d="M1026.4 549.2 A5.6 5.6 0 0 0 1018.6 557 Z" fill="#7a7a7a"/><text x="1043.8" y="558.8" font-family="Liberation Serif" font-size="15.4" fill="#6a6a6a">T</text><rect x="1072.6" y="549.2" width="9" height="9" fill="none" stroke="#6a6a6a" stroke-width="1.1"/><rect x="1071.3" y="547.9000000000001" width="2.6" height="2.6" fill="#c0c0c0" stroke="#555" stroke-width=".8"/><rect x="1071.3" y="556.9000000000001" width="2.6" height="2.6" fill="#c0c0c0" stroke="#555" stroke-width=".8"/><rect x="1080.3" y="547.9000000000001" width="2.6" height="2.6" fill="#c0c0c0" stroke="#555" stroke-width=".8"/><rect x="1080.3" y="556.9000000000001" width="2.6" height="2.6" fill="#c0c0c0" stroke="#555" stroke-width=".8"/><path d="M1102.6 551 V547.2 H1108 L1110.2 549.4 V556.2 H1106" fill="none" stroke="#6a6a6a" stroke-width="1"/><rect x="1098.8" y="552.6" width="7" height="6.6" fill="#bdbdbd" stroke="#5a5a5a" stroke-width="1"/><rect x="1103.2" y="550.8" width="4.6" height="4.6" fill="#6a6a6a"/><rect x="1126.4" y="544.4" width="10" height="18.4" fill="#a6a6a6" stroke="#8a8a8a" stroke-width=".9"/><path d="M1126.4 553.4 H1136.4" stroke="#8a8a8a" stroke-width="1"/><rect x="1127.2" y="545.2" width="8.4" height="8" fill="#b4b4b4"/><rect x="938.4" y="611.6" width="11.8" height="12" fill="#d6d6d6" stroke="#777" stroke-width="1"/><rect x="938.40" y="611.60" width="3.93" height="4" fill="#8c8c8c"/><rect x="938.40" y="619.60" width="3.93" height="4" fill="#8c8c8c"/><rect x="942.33" y="615.60" width="3.93" height="4" fill="#8c8c8c"/><rect x="946.26" y="611.60" width="3.93" height="4" fill="#8c8c8c"/><rect x="946.26" y="619.60" width="3.93" height="4" fill="#8c8c8c"/><path d="M976.6 610.6 L968.4 619.4" stroke="#777" stroke-width="1.6"/><path d="M961 624.4 Q964 624.8 967.4 623.4 Q970.2 621.6 969 619.6 Q967.4 618.4 965.6 619.8 Q963.4 622.8 961 624.4Z" fill="#777"/><path d="M994.3 610.2 V623.8 M987.5 617 H1001.1" stroke="#6e6e6e" stroke-width="1.3"/><path d="M991.8 612.6 L994.3 609.8 L996.8 612.6Z M991.8 621.4 L994.3 624.2 L996.8 621.4Z M989.9 614.5 L987.1 617 L989.9 619.5Z M998.7 614.5 L1001.5 617 L998.7 619.5Z" fill="#6e6e6e"/><path d="M1016.6 617.4 V614.8 A3.5 3.5 0 0 1 1023.6 614.8 V617.4" fill="none" stroke="#6e6e6e" stroke-width="1.6"/><rect x="1014.4" y="617.2" width="11.4" height="7.2" rx="1" fill="#6e6e6e"/><rect x="1019.4" y="619.4" width="1.5" height="2.8" fill="#c8c8c8"/><rect x="1012.4" y="744.6" width="9" height="7" rx="3.5" fill="none" stroke="#7a7a7a" stroke-width="1.7"/><rect x="1018.2" y="744.6" width="9" height="7" rx="3.5" fill="none" stroke="#7a7a7a" stroke-width="1.7"/><path d="M1016 748.1 H1023.8" stroke="#7a7a7a" stroke-width="1.7"/><text x="1044" y="752.6" font-family="Liberation Serif" font-style="italic" font-size="15" letter-spacing="-0.4" fill="#1e1e1e">fx</text><path d="M1059.6 753.6 H1063.4 L1061.5 755.8Z" fill="#111"/><rect x="1074.6" y="744" width="13" height="10.8" fill="#5a5a5a" stroke="#2e2e2e" stroke-width="1.1"/><circle cx="1081" cy="749.3" r="2.5" fill="#e0e0e0"/><circle cx="1111.4" cy="747.8" r="5.6" fill="#dcdcdc" stroke="#2a2a2a" stroke-width="1.1"/><path d="M1115.4 743.8 A5.6 5.6 0 0 0 1107.4 751.8 Z" fill="#333"/><path d="M1116 752.8 H1119.6 L1117.8 754.8Z" fill="#111"/><path d="M1135.8 753.2 V743.2 H1141 L1142.2 744.8 H1148.8 V753.2 Z" fill="#a2a2a2" stroke="#333" stroke-width="1.1" stroke-linejoin="round"/><path d="M1167.2 742.8 H1178 V753.4 H1170.2 L1167.2 750.4 Z" fill="#a6a6a6" stroke="#333" stroke-width="1.1" stroke-linejoin="round"/><path d="M1167.4 750.4 H1170.2 V753.2" fill="none" stroke="#333" stroke-width="1"/><path d="M1197 745.2 H1209.2 M1201 745 V743 H1205.2 V745" fill="none" stroke="#2a2a2a" stroke-width="1.4"/><path d="M1198.4 746.6 L1199.2 754.4 H1207 L1207.8 746.6" fill="#9a9a9a" stroke="#2a2a2a" stroke-width="1.2"/><path d="M1201.4 747.6 V753.4 M1203.1 747.6 V753.4 M1204.8 747.6 V753.4" stroke="#444" stroke-width=".8"/></svg>
<div style="left:75px;top:759.2px;width:1168px;height:75.6px;background:#0099cc"></div>
<div class="t" style="left:96.6px;top:776.6px;font-size:40.5px;line-height:40px;color:#fff;transform:scaleX(0.875);transform-origin:0 0;-webkit-text-stroke:0.8px #0099cc">32px asset</div>
<div class="t" style="left:286.8px;top:792.6px;font-size:21.8px;line-height:22px;color:#b0def0;transform:scaleX(0.985);transform-origin:0 0;-webkit-text-stroke:0.45px #0099cc">(32dp @ MDPI)</div>
</body></html>
